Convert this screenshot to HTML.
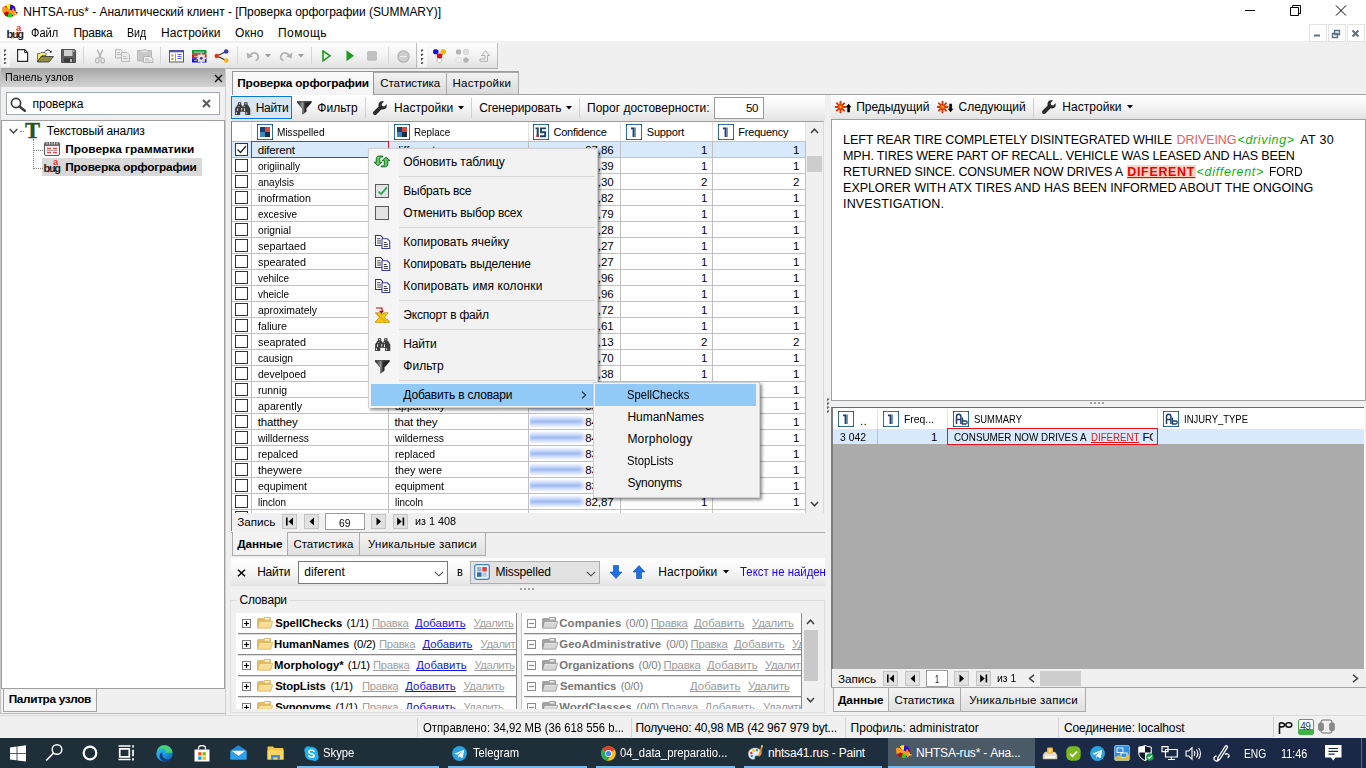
<!DOCTYPE html><html><head><meta charset="utf-8"><title>NHTSA-rus</title><style>
*{box-sizing:border-box;margin:0;padding:0}
html,body{width:1366px;height:768px;overflow:hidden;background:#f0f0f0}
body{font-family:"Liberation Sans",sans-serif;font-size:12px;color:#000;position:relative}
.a{position:absolute}
.t{position:absolute;white-space:nowrap;line-height:1}
u{text-decoration:underline}
.t{text-decoration-skip-ink:none}
</style></head><body>
<div class="a" style="left:0px;top:0px;width:1366px;height:41px;background:#fff"></div>
<div class="t" style="left:23.3px;top:6.2px;font-size:12px;letter-spacing:-0.041px;">NHTSA-rus* - Аналитический клиент - [Проверка орфографии (SUMMARY)]</div>
<svg class="a" style="left:1240px;top:0px;" width="110" height="22" viewBox="0 0 110 22"><path d="M5 10.5h10M50.5 7.5h8v8h-8zM52.5 7.5v-2h8v8h-2M96 5.5l10 10M106 5.5l-10 10" fill="none" stroke="#000" stroke-width="1"/></svg>
<div class="t" style="left:30.8px;top:26.7px;font-size:12px;letter-spacing:0.000px;transform:scaleX(0.9220);transform-origin:0 0;">Файл</div>
<div class="t" style="left:73.5px;top:26.7px;font-size:12px;letter-spacing:-0.256px;">Правка</div>
<div class="t" style="left:127.3px;top:26.7px;font-size:12px;letter-spacing:0.000px;transform:scaleX(0.8844);transform-origin:0 0;">Вид</div>
<div class="t" style="left:161.0px;top:26.7px;font-size:12px;letter-spacing:0.073px;">Настройки</div>
<div class="t" style="left:235.0px;top:26.7px;font-size:12px;letter-spacing:0.154px;">Окно</div>
<div class="t" style="left:278.0px;top:26.7px;font-size:12px;letter-spacing:0.442px;">Помощь</div>
<div class="a" style="left:1309px;top:24px;width:18px;height:18px;border:1px solid #e3e3e3;background:#fff"></div>
<div class="a" style="left:1328px;top:24px;width:18px;height:18px;border:1px solid #e3e3e3;background:#fff"></div>
<div class="a" style="left:1347px;top:24px;width:18px;height:18px;border:1px solid #e3e3e3;background:#fff"></div>
<svg class="a" style="left:1309px;top:24px;" width="56" height="18" viewBox="0 0 56 18"><path d="M5 11.5h6" stroke="#5f6f86" stroke-width="2"/><path d="M25.5 6.5h5v4h-5zM23.5 9.5h5v4h-5z" fill="#fff" stroke="#5f6f86" stroke-width="1.4"/><path d="M43.5 6.5l6 6M49.5 6.5l-6 6" stroke="#5f6f86" stroke-width="2"/></svg>
<div class="a" style="left:0px;top:43px;width:417px;height:25px;background:linear-gradient(#fdfdfd,#f3f3f3 50%,#e2e2e2);border-right:1px solid #bdbdbd"></div>
<div class="a" style="left:417px;top:43px;width:81px;height:25px;background:linear-gradient(#fdfdfd,#f3f3f3 50%,#e2e2e2);border-right:1px solid #bdbdbd"></div>
<div class="a" style="left:0px;top:87px;width:226px;height:627px;background:#f0f0f0"></div>
<div class="a" style="left:1px;top:68px;width:224px;height:19px;background:linear-gradient(#a6a6a6,#d4d4d4)"></div>
<div class="t" style="left:4.7px;top:72.0px;font-size:11.5px;letter-spacing:0.000px;transform:scaleX(0.9376);transform-origin:0 0;">Панель узлов</div>
<svg class="a" style="left:214px;top:74px;" width="9" height="9" viewBox="0 0 9 9"><path d="M1 1l7 7M8 1l-7 7" stroke="#000" stroke-width="1.3" fill="none"/></svg>
<div class="a" style="left:6px;top:92px;width:214px;height:23px;background:#fff;border:1px solid #a2a7ae"></div>
<svg class="a" style="left:10px;top:96.5px;" width="17" height="15" viewBox="0 0 17 15"><circle cx="6" cy="6" r="4.600" fill="none" stroke="#3a3a3a" stroke-width="1.700"/><path d="M9.500 9.500l5.300 4.300" stroke="#3a3a3a" stroke-width="2.400" stroke-linecap="round"/></svg>
<div class="t" style="left:32.5px;top:97.8px;font-size:12px;letter-spacing:-0.103px;">проверка</div>
<svg class="a" style="left:202px;top:99px;" width="9" height="9" viewBox="0 0 9 9"><path d="M1 1l7 7M8 1l-7 7" stroke="#5a5a5a" stroke-width="2" fill="none"/></svg>
<div class="a" style="left:1px;top:120px;width:224px;height:569px;background:#fff;border:1px solid #9f9f9f"></div>
<svg class="a" style="left:9px;top:128px;" width="9" height="7" viewBox="0 0 9 7"><path d="M0.7 1l3.8 4 3.8-4" stroke="#404040" stroke-width="1.4" fill="none"/></svg>
<div class="t" style="left:25px;top:119.5px;font-family:'Liberation Serif',serif;font-weight:bold;font-size:22.5px;color:#26551f;-webkit-text-stroke:0.4px #26551f">T</div>
<div class="t" style="left:46.7px;top:124.7px;font-size:12px;letter-spacing:-0.186px;">Текстовый анализ</div>
<div class="t" style="left:65.3px;top:143.8px;font-size:11.8px;letter-spacing:0.034px;font-weight:bold;">Проверка грамматики</div>
<div class="a" style="left:42px;top:158px;width:160px;height:18px;background:#d9d9d9"></div>
<div class="t" style="left:65.3px;top:161.5px;font-size:11.8px;letter-spacing:-0.180px;font-weight:bold;">Проверка орфографии</div>
<div class="a" style="left:20px;top:131px;width:4px;height:1px;border-top:1px dotted #808080"></div>
<div class="a" style="left:33px;top:139px;width:1px;height:30px;border-left:1px dotted #808080"></div>
<div class="a" style="left:33px;top:150px;width:10px;height:1px;border-top:1px dotted #808080"></div>
<div class="a" style="left:33px;top:168px;width:10px;height:1px;border-top:1px dotted #808080"></div>
<div class="a" style="left:3px;top:689px;width:94px;height:23px;background:#f5f5f5;border:1px solid #a4a4a4;border-top:none"></div>
<div class="t" style="left:8.7px;top:693.8px;font-size:11.8px;letter-spacing:-0.326px;font-weight:bold;">Палитра узлов</div>
<div class="a" style="left:0px;top:713px;width:226px;height:1px;background:#bcbcbc"></div>
<div class="a" style="left:0px;top:68px;width:1px;height:646px;background:#c6c6c6"></div>
<div class="a" style="left:225px;top:68px;width:1px;height:647px;background:#cfcfcf"></div>
<div class="a" style="left:374px;top:94px;width:992px;height:1px;background:#a3a3a3"></div>
<div class="a" style="left:374px;top:72px;width:73px;height:22px;background:linear-gradient(#f2f2f2,#dadada);border:1px solid #a9a9a9;border-left:none;border-bottom:none"></div>
<div class="a" style="left:447px;top:72px;width:72px;height:22px;background:linear-gradient(#f2f2f2,#dadada);border:1px solid #a9a9a9;border-left:none;border-bottom:none"></div>
<div class="a" style="left:374px;top:71px;width:145px;height:1px;background:#9c9c9c"></div>
<div class="a" style="left:226px;top:68px;width:272px;height:1px;background:#adadad"></div>
<div class="a" style="left:232px;top:71px;width:142px;height:24px;background:linear-gradient(#fafafa,#f4f4f4);border:1px solid #959595;border-bottom:none"></div>
<div class="t" style="left:237.3px;top:77.5px;font-size:11.8px;letter-spacing:-0.165px;font-weight:bold;">Проверка орфографии</div>
<div class="t" style="left:380.2px;top:77.8px;font-size:11.5px;letter-spacing:-0.040px;">Статистика</div>
<div class="t" style="left:452.5px;top:77.8px;font-size:11.5px;letter-spacing:0.268px;">Настройки</div>
<div class="a" style="left:231px;top:95px;width:594px;height:26px;background:linear-gradient(#ffffff,#f6f6f6 45%,#e3e3e3)"></div>
<div class="a" style="left:231px;top:96px;width:61px;height:23px;background:#d8e6f3;border:1px solid #0a78d6"></div>
<div class="t" style="left:255.7px;top:102.1px;font-size:12px;letter-spacing:-0.289px;">Найти</div>
<div class="t" style="left:317.3px;top:102.1px;font-size:12px;letter-spacing:0.014px;">Фильтр</div>
<div class="a" style="left:365px;top:98px;width:1px;height:20px;background:#d0d0d0"></div>
<div class="t" style="left:394.0px;top:102.1px;font-size:12px;letter-spacing:0.051px;">Настройки</div>
<svg class="a" style="left:458px;top:106px;" width="6" height="4" viewBox="0 0 6 4"><path d="M0 0h6l-3 3.5z" fill="#000"/></svg>
<div class="a" style="left:471px;top:98px;width:1px;height:20px;background:#d0d0d0"></div>
<div class="t" style="left:479.2px;top:102.1px;font-size:12px;letter-spacing:-0.137px;">Сгенерировать</div>
<svg class="a" style="left:566px;top:106px;" width="6" height="4" viewBox="0 0 6 4"><path d="M0 0h6l-3 3.5z" fill="#000"/></svg>
<div class="a" style="left:579px;top:98px;width:1px;height:20px;background:#d0d0d0"></div>
<div class="t" style="left:587.0px;top:102.1px;font-size:12px;letter-spacing:0.005px;">Порог достоверности:</div>
<div class="a" style="left:714px;top:97px;width:50px;height:22px;background:#fff;border:1px solid #9a9a9a"></div>
<div class="t" style="right:608.0px;top:103.3px;font-size:11.5px;letter-spacing:-0.4px;">50</div>
<div class="a" style="left:231px;top:121px;width:593px;height:410px;background:#fff;border:1px solid #9e9e9e;border-left-color:#7e7e7e;border-bottom:none;border-right:1px solid #dadada"></div>
<div class="a" style="left:251px;top:122px;width:1px;height:20px;background:#e2e2e2"></div>
<div class="a" style="left:388px;top:122px;width:1px;height:20px;background:#e2e2e2"></div>
<div class="a" style="left:528px;top:122px;width:1px;height:20px;background:#e2e2e2"></div>
<div class="a" style="left:620px;top:122px;width:1px;height:20px;background:#e2e2e2"></div>
<div class="a" style="left:712px;top:122px;width:1px;height:20px;background:#e2e2e2"></div>
<div class="a" style="left:805px;top:122px;width:1px;height:20px;background:#e2e2e2"></div>
<svg class="a" style="left:257px;top:124px;" width="16" height="16" viewBox="0 0 16 16"><rect x="0.5" y="0.5" width="15" height="15" fill="#fff" stroke="#2f6f9f"/><rect x="3" y="3" width="5" height="5" fill="#1d3f6a"/><rect x="8" y="3" width="5" height="5" fill="#e0443c"/><rect x="3" y="8" width="5" height="5" fill="#3f86c0"/><rect x="8" y="8" width="5" height="5" fill="#1b2f45"/><path d="M0 2V0h2M14 0h2v2M16 14v2h-2M2 16H0v-2" stroke="#1d3f6a" fill="none"/></svg>
<div class="t" style="left:277.2px;top:127.1px;font-size:11px;letter-spacing:0.000px;transform:scaleX(0.9140);transform-origin:0 0;">Misspelled</div>
<svg class="a" style="left:394px;top:124px;" width="16" height="16" viewBox="0 0 16 16"><rect x="0.5" y="0.5" width="15" height="15" fill="#fff" stroke="#2f6f9f"/><rect x="3" y="3" width="5" height="5" fill="#1d3f6a"/><rect x="8" y="3" width="5" height="5" fill="#e0443c"/><rect x="3" y="8" width="5" height="5" fill="#3f86c0"/><rect x="8" y="8" width="5" height="5" fill="#1b2f45"/><path d="M0 2V0h2M14 0h2v2M16 14v2h-2M2 16H0v-2" stroke="#1d3f6a" fill="none"/></svg>
<div class="t" style="left:413.8px;top:127.1px;font-size:11px;letter-spacing:0.000px;transform:scaleX(0.8969);transform-origin:0 0;">Replace</div>
<svg class="a" style="left:533px;top:124px;" width="16" height="16" viewBox="0 0 16 16"><rect x="0.5" y="0.5" width="15" height="15" fill="#fff" stroke="#2f6f9f"/><path d="M0 2V0h2M14 0h2v2M16 14v2h-2M2 16H0v-2" stroke="#1d3f6a" fill="none"/><path d="M2.500 3.500h3.200v9.500H3.700V5H2.500z" fill="#1d3f6a"/><path d="M13 4.400H8v3.800h4.200v4H7" fill="none" stroke="#1d3f6a" stroke-width="1.900"/><rect x="3.400" y="11" width="2.600" height="2" fill="#d22"/></svg>
<div class="t" style="left:553.5px;top:127.1px;font-size:11px;letter-spacing:-0.265px;">Confidence</div>
<svg class="a" style="left:626px;top:124px;" width="16" height="16" viewBox="0 0 16 16"><rect x="0.5" y="0.5" width="15" height="15" fill="#fff" stroke="#2f6f9f"/><path d="M0 2V0h2M14 0h2v2M16 14v2h-2M2 16H0v-2" stroke="#1d3f6a" fill="none"/><path d="M5 3.500h3.600v9.500H6.600V5.200H5z" fill="#1d3f6a"/><path d="M8.600 3.500h1.200v9.500h-1.200z" fill="#4f80ac"/></svg>
<div class="t" style="left:646.7px;top:127.1px;font-size:11px;letter-spacing:-0.147px;">Support</div>
<svg class="a" style="left:718px;top:124px;" width="16" height="16" viewBox="0 0 16 16"><rect x="0.5" y="0.5" width="15" height="15" fill="#fff" stroke="#2f6f9f"/><path d="M0 2V0h2M14 0h2v2M16 14v2h-2M2 16H0v-2" stroke="#1d3f6a" fill="none"/><path d="M5 3.500h3.600v9.500H6.600V5.200H5z" fill="#1d3f6a"/><path d="M8.600 3.500h1.200v9.500h-1.200z" fill="#4f80ac"/></svg>
<div class="t" style="left:738.3px;top:127.1px;font-size:11px;letter-spacing:-0.219px;">Frequency</div>
<div class="a" style="left:232px;top:141px;width:574px;height:372px;overflow:hidden">
<div class="a" style="left:0;top:0px;width:574px;height:16px;background:#d7e9fb;border-top:1px solid #c0c0c0"></div>
<div class="a" style="left:3px;top:2px;width:13px;height:13px;background:#fff;border:1px solid #333"></div>
<svg class="a" style="left:3px;top:2px" width="13" height="13"><path d="M2.5 6.5l3 3 5.5-6.5" fill="none" stroke="#222" stroke-width="1.2"/></svg>
<div class="t" style="left:25.7px;top:3.6px;font-size:11.5px;letter-spacing:-0.170px">diferent</div>
<div class="t" style="left:162.5px;top:3.6px;font-size:11.5px;letter-spacing:-0.038px">different</div>
<div class="t" style="right:192.5px;top:3.6px;font-size:11.5px;letter-spacing:-0.1px">97,86</div>
<div class="t" style="right:98.5px;top:3.6px;font-size:11.5px">1</div>
<div class="t" style="right:6.5px;top:3.6px;font-size:11.5px">1</div>
<div class="a" style="left:0;top:16px;width:574px;height:16px;background:#fff;border-top:1px solid #c0c0c0"></div>
<div class="a" style="left:3px;top:18px;width:13px;height:13px;background:#fff;border:1px solid #333"></div>
<div class="t" style="left:25.7px;top:19.6px;font-size:11.5px;transform:scaleX(0.8761);transform-origin:0 0">origiinally</div>
<div class="t" style="left:162.5px;top:19.6px;font-size:11.5px;transform:scaleX(0.8814);transform-origin:0 0">originally</div>
<div class="a" style="left:297px;top:18px;width:67px;height:13px;background:linear-gradient(#fff,#9fbbf6 50%,#fff);-webkit-mask-image:linear-gradient(90deg,transparent,#000 2px,#000 calc(100% - 8px),transparent)"></div>
<div class="t" style="right:192.5px;top:19.6px;font-size:11.5px;letter-spacing:-0.1px">96,39</div>
<div class="t" style="right:98.5px;top:19.6px;font-size:11.5px">1</div>
<div class="t" style="right:6.5px;top:19.6px;font-size:11.5px">1</div>
<div class="a" style="left:0;top:32px;width:574px;height:16px;background:#fff;border-top:1px solid #c0c0c0"></div>
<div class="a" style="left:3px;top:34px;width:13px;height:13px;background:#fff;border:1px solid #333"></div>
<div class="t" style="left:25.7px;top:35.6px;font-size:11.5px;transform:scaleX(0.8665);transform-origin:0 0">anaylsis</div>
<div class="t" style="left:162.5px;top:35.6px;font-size:11.5px;transform:scaleX(0.8665);transform-origin:0 0">analysis</div>
<div class="a" style="left:297px;top:34px;width:66px;height:13px;background:linear-gradient(#fff,#9fbbf6 50%,#fff);-webkit-mask-image:linear-gradient(90deg,transparent,#000 2px,#000 calc(100% - 8px),transparent)"></div>
<div class="t" style="right:192.5px;top:35.6px;font-size:11.5px;letter-spacing:-0.1px">95,30</div>
<div class="t" style="right:98.5px;top:35.6px;font-size:11.5px">2</div>
<div class="t" style="right:6.5px;top:35.6px;font-size:11.5px">2</div>
<div class="a" style="left:0;top:48px;width:574px;height:16px;background:#fff;border-top:1px solid #c0c0c0"></div>
<div class="a" style="left:3px;top:50px;width:13px;height:13px;background:#fff;border:1px solid #333"></div>
<div class="t" style="left:25.7px;top:51.6px;font-size:11.5px;transform:scaleX(0.9316);transform-origin:0 0">inofrmation</div>
<div class="t" style="left:162.5px;top:51.6px;font-size:11.5px;transform:scaleX(0.9316);transform-origin:0 0">information</div>
<div class="a" style="left:297px;top:50px;width:65px;height:13px;background:linear-gradient(#fff,#9fbbf6 50%,#fff);-webkit-mask-image:linear-gradient(90deg,transparent,#000 2px,#000 calc(100% - 8px),transparent)"></div>
<div class="t" style="right:192.5px;top:51.6px;font-size:11.5px;letter-spacing:-0.1px">93,82</div>
<div class="t" style="right:98.5px;top:51.6px;font-size:11.5px">1</div>
<div class="t" style="right:6.5px;top:51.6px;font-size:11.5px">1</div>
<div class="a" style="left:0;top:64px;width:574px;height:16px;background:#fff;border-top:1px solid #c0c0c0"></div>
<div class="a" style="left:3px;top:66px;width:13px;height:13px;background:#fff;border:1px solid #333"></div>
<div class="t" style="left:25.7px;top:67.6px;font-size:11.5px;transform:scaleX(0.8716);transform-origin:0 0">excesive</div>
<div class="t" style="left:162.5px;top:67.6px;font-size:11.5px;transform:scaleX(0.8714);transform-origin:0 0">excessive</div>
<div class="a" style="left:297px;top:66px;width:64px;height:13px;background:linear-gradient(#fff,#9fbbf6 50%,#fff);-webkit-mask-image:linear-gradient(90deg,transparent,#000 2px,#000 calc(100% - 8px),transparent)"></div>
<div class="t" style="right:192.5px;top:67.6px;font-size:11.5px;letter-spacing:-0.1px">92,79</div>
<div class="t" style="right:98.5px;top:67.6px;font-size:11.5px">1</div>
<div class="t" style="right:6.5px;top:67.6px;font-size:11.5px">1</div>
<div class="a" style="left:0;top:80px;width:574px;height:16px;background:#fff;border-top:1px solid #c0c0c0"></div>
<div class="a" style="left:3px;top:82px;width:13px;height:13px;background:#fff;border:1px solid #333"></div>
<div class="t" style="left:25.7px;top:83.6px;font-size:11.5px;transform:scaleX(0.8900);transform-origin:0 0">orignial</div>
<div class="t" style="left:162.5px;top:83.6px;font-size:11.5px;transform:scaleX(0.8900);transform-origin:0 0">original</div>
<div class="a" style="left:297px;top:82px;width:64px;height:13px;background:linear-gradient(#fff,#9fbbf6 50%,#fff);-webkit-mask-image:linear-gradient(90deg,transparent,#000 2px,#000 calc(100% - 8px),transparent)"></div>
<div class="t" style="right:192.5px;top:83.6px;font-size:11.5px;letter-spacing:-0.1px">92,28</div>
<div class="t" style="right:98.5px;top:83.6px;font-size:11.5px">1</div>
<div class="t" style="right:6.5px;top:83.6px;font-size:11.5px">1</div>
<div class="a" style="left:0;top:96px;width:574px;height:16px;background:#fff;border-top:1px solid #c0c0c0"></div>
<div class="a" style="left:3px;top:98px;width:13px;height:13px;background:#fff;border:1px solid #333"></div>
<div class="t" style="left:25.7px;top:99.6px;font-size:11.5px;transform:scaleX(0.9384);transform-origin:0 0">separtaed</div>
<div class="t" style="left:162.5px;top:99.6px;font-size:11.5px;transform:scaleX(0.9384);transform-origin:0 0">separated</div>
<div class="a" style="left:297px;top:98px;width:63px;height:13px;background:linear-gradient(#fff,#9fbbf6 50%,#fff);-webkit-mask-image:linear-gradient(90deg,transparent,#000 2px,#000 calc(100% - 8px),transparent)"></div>
<div class="t" style="right:192.5px;top:99.6px;font-size:11.5px;letter-spacing:-0.1px">91,27</div>
<div class="t" style="right:98.5px;top:99.6px;font-size:11.5px">1</div>
<div class="t" style="right:6.5px;top:99.6px;font-size:11.5px">1</div>
<div class="a" style="left:0;top:112px;width:574px;height:16px;background:#fff;border-top:1px solid #c0c0c0"></div>
<div class="a" style="left:3px;top:114px;width:13px;height:13px;background:#fff;border:1px solid #333"></div>
<div class="t" style="left:25.7px;top:115.6px;font-size:11.5px;transform:scaleX(0.9384);transform-origin:0 0">spearated</div>
<div class="t" style="left:162.5px;top:115.6px;font-size:11.5px;transform:scaleX(0.9384);transform-origin:0 0">separated</div>
<div class="a" style="left:297px;top:114px;width:63px;height:13px;background:linear-gradient(#fff,#9fbbf6 50%,#fff);-webkit-mask-image:linear-gradient(90deg,transparent,#000 2px,#000 calc(100% - 8px),transparent)"></div>
<div class="t" style="right:192.5px;top:115.6px;font-size:11.5px;letter-spacing:-0.1px">91,27</div>
<div class="t" style="right:98.5px;top:115.6px;font-size:11.5px">1</div>
<div class="t" style="right:6.5px;top:115.6px;font-size:11.5px">1</div>
<div class="a" style="left:0;top:128px;width:574px;height:16px;background:#fff;border-top:1px solid #c0c0c0"></div>
<div class="a" style="left:3px;top:130px;width:13px;height:13px;background:#fff;border:1px solid #333"></div>
<div class="t" style="left:25.7px;top:131.6px;font-size:11.5px;transform:scaleX(0.8660);transform-origin:0 0">vehilce</div>
<div class="t" style="left:162.5px;top:131.6px;font-size:11.5px;transform:scaleX(0.8660);transform-origin:0 0">vehicle</div>
<div class="a" style="left:297px;top:130px;width:62px;height:13px;background:linear-gradient(#fff,#9fbbf6 50%,#fff);-webkit-mask-image:linear-gradient(90deg,transparent,#000 2px,#000 calc(100% - 8px),transparent)"></div>
<div class="t" style="right:192.5px;top:131.6px;font-size:11.5px;letter-spacing:-0.1px">89,96</div>
<div class="t" style="right:98.5px;top:131.6px;font-size:11.5px">1</div>
<div class="t" style="right:6.5px;top:131.6px;font-size:11.5px">1</div>
<div class="a" style="left:0;top:144px;width:574px;height:16px;background:#fff;border-top:1px solid #c0c0c0"></div>
<div class="a" style="left:3px;top:146px;width:13px;height:13px;background:#fff;border:1px solid #333"></div>
<div class="t" style="left:25.7px;top:147.6px;font-size:11.5px;transform:scaleX(0.8660);transform-origin:0 0">vheicle</div>
<div class="t" style="left:162.5px;top:147.6px;font-size:11.5px;transform:scaleX(0.8660);transform-origin:0 0">vehicle</div>
<div class="a" style="left:297px;top:146px;width:62px;height:13px;background:linear-gradient(#fff,#9fbbf6 50%,#fff);-webkit-mask-image:linear-gradient(90deg,transparent,#000 2px,#000 calc(100% - 8px),transparent)"></div>
<div class="t" style="right:192.5px;top:147.6px;font-size:11.5px;letter-spacing:-0.1px">89,96</div>
<div class="t" style="right:98.5px;top:147.6px;font-size:11.5px">1</div>
<div class="t" style="right:6.5px;top:147.6px;font-size:11.5px">1</div>
<div class="a" style="left:0;top:160px;width:574px;height:16px;background:#fff;border-top:1px solid #c0c0c0"></div>
<div class="a" style="left:3px;top:162px;width:13px;height:13px;background:#fff;border:1px solid #333"></div>
<div class="t" style="left:25.7px;top:163.6px;font-size:11.5px;transform:scaleX(0.9050);transform-origin:0 0">aproximately</div>
<div class="t" style="left:162.5px;top:163.6px;font-size:11.5px;transform:scaleX(0.9079);transform-origin:0 0">approximately</div>
<div class="a" style="left:297px;top:162px;width:62px;height:13px;background:linear-gradient(#fff,#9fbbf6 50%,#fff);-webkit-mask-image:linear-gradient(90deg,transparent,#000 2px,#000 calc(100% - 8px),transparent)"></div>
<div class="t" style="right:192.5px;top:163.6px;font-size:11.5px;letter-spacing:-0.1px">88,72</div>
<div class="t" style="right:98.5px;top:163.6px;font-size:11.5px">1</div>
<div class="t" style="right:6.5px;top:163.6px;font-size:11.5px">1</div>
<div class="a" style="left:0;top:176px;width:574px;height:16px;background:#fff;border-top:1px solid #c0c0c0"></div>
<div class="a" style="left:3px;top:178px;width:13px;height:13px;background:#fff;border:1px solid #333"></div>
<div class="t" style="left:25.7px;top:179.6px;font-size:11.5px;transform:scaleX(0.9258);transform-origin:0 0">faliure</div>
<div class="t" style="left:162.5px;top:179.6px;font-size:11.5px;transform:scaleX(0.9258);transform-origin:0 0">failure</div>
<div class="a" style="left:297px;top:178px;width:62px;height:13px;background:linear-gradient(#fff,#9fbbf6 50%,#fff);-webkit-mask-image:linear-gradient(90deg,transparent,#000 2px,#000 calc(100% - 8px),transparent)"></div>
<div class="t" style="right:192.5px;top:179.6px;font-size:11.5px;letter-spacing:-0.1px">88,61</div>
<div class="t" style="right:98.5px;top:179.6px;font-size:11.5px">1</div>
<div class="t" style="right:6.5px;top:179.6px;font-size:11.5px">1</div>
<div class="a" style="left:0;top:192px;width:574px;height:16px;background:#fff;border-top:1px solid #c0c0c0"></div>
<div class="a" style="left:3px;top:194px;width:13px;height:13px;background:#fff;border:1px solid #333"></div>
<div class="t" style="left:25.7px;top:195.6px;font-size:11.5px;transform:scaleX(0.9384);transform-origin:0 0">seaprated</div>
<div class="t" style="left:162.5px;top:195.6px;font-size:11.5px;transform:scaleX(0.9384);transform-origin:0 0">separated</div>
<div class="a" style="left:297px;top:194px;width:61px;height:13px;background:linear-gradient(#fff,#9fbbf6 50%,#fff);-webkit-mask-image:linear-gradient(90deg,transparent,#000 2px,#000 calc(100% - 8px),transparent)"></div>
<div class="t" style="right:192.5px;top:195.6px;font-size:11.5px;letter-spacing:-0.1px">88,13</div>
<div class="t" style="right:98.5px;top:195.6px;font-size:11.5px">2</div>
<div class="t" style="right:6.5px;top:195.6px;font-size:11.5px">2</div>
<div class="a" style="left:0;top:208px;width:574px;height:16px;background:#fff;border-top:1px solid #c0c0c0"></div>
<div class="a" style="left:3px;top:210px;width:13px;height:13px;background:#fff;border:1px solid #333"></div>
<div class="t" style="left:25.7px;top:211.6px;font-size:11.5px;transform:scaleX(0.8830);transform-origin:0 0">causign</div>
<div class="t" style="left:162.5px;top:211.6px;font-size:11.5px;transform:scaleX(0.8830);transform-origin:0 0">causing</div>
<div class="a" style="left:297px;top:210px;width:60px;height:13px;background:linear-gradient(#fff,#9fbbf6 50%,#fff);-webkit-mask-image:linear-gradient(90deg,transparent,#000 2px,#000 calc(100% - 8px),transparent)"></div>
<div class="t" style="right:192.5px;top:211.6px;font-size:11.5px;letter-spacing:-0.1px">86,70</div>
<div class="t" style="right:98.5px;top:211.6px;font-size:11.5px">1</div>
<div class="t" style="right:6.5px;top:211.6px;font-size:11.5px">1</div>
<div class="a" style="left:0;top:224px;width:574px;height:16px;background:#fff;border-top:1px solid #c0c0c0"></div>
<div class="a" style="left:3px;top:226px;width:13px;height:13px;background:#fff;border:1px solid #333"></div>
<div class="t" style="left:25.7px;top:227.6px;font-size:11.5px;transform:scaleX(0.9043);transform-origin:0 0">develpoed</div>
<div class="t" style="left:162.5px;top:227.6px;font-size:11.5px;transform:scaleX(0.9043);transform-origin:0 0">developed</div>
<div class="a" style="left:297px;top:226px;width:60px;height:13px;background:linear-gradient(#fff,#9fbbf6 50%,#fff);-webkit-mask-image:linear-gradient(90deg,transparent,#000 2px,#000 calc(100% - 8px),transparent)"></div>
<div class="t" style="right:192.5px;top:227.6px;font-size:11.5px;letter-spacing:-0.1px">86,38</div>
<div class="t" style="right:98.5px;top:227.6px;font-size:11.5px">1</div>
<div class="t" style="right:6.5px;top:227.6px;font-size:11.5px">1</div>
<div class="a" style="left:0;top:240px;width:574px;height:16px;background:#fff;border-top:1px solid #c0c0c0"></div>
<div class="a" style="left:3px;top:242px;width:13px;height:13px;background:#fff;border:1px solid #333"></div>
<div class="t" style="left:25.7px;top:243.6px;font-size:11.5px;transform:scaleX(0.9071);transform-origin:0 0">runnig</div>
<div class="t" style="left:162.5px;top:243.6px;font-size:11.5px;transform:scaleX(0.9123);transform-origin:0 0">running</div>
<div class="a" style="left:297px;top:242px;width:59px;height:13px;background:linear-gradient(#fff,#9fbbf6 50%,#fff);-webkit-mask-image:linear-gradient(90deg,transparent,#000 2px,#000 calc(100% - 8px),transparent)"></div>
<div class="t" style="right:192.5px;top:243.6px;font-size:11.5px;letter-spacing:-0.1px">85,71</div>
<div class="t" style="right:98.5px;top:243.6px;font-size:11.5px">1</div>
<div class="t" style="right:6.5px;top:243.6px;font-size:11.5px">1</div>
<div class="a" style="left:0;top:256px;width:574px;height:16px;background:#fff;border-top:1px solid #c0c0c0"></div>
<div class="a" style="left:3px;top:258px;width:13px;height:13px;background:#fff;border:1px solid #333"></div>
<div class="t" style="left:25.7px;top:259.6px;font-size:11.5px;transform:scaleX(0.9300);transform-origin:0 0">aparently</div>
<div class="t" style="left:162.5px;top:259.6px;font-size:11.5px;transform:scaleX(0.9310);transform-origin:0 0">apparently</div>
<div class="a" style="left:297px;top:258px;width:59px;height:13px;background:linear-gradient(#fff,#9fbbf6 50%,#fff);-webkit-mask-image:linear-gradient(90deg,transparent,#000 2px,#000 calc(100% - 8px),transparent)"></div>
<div class="t" style="right:192.5px;top:259.6px;font-size:11.5px;letter-spacing:-0.1px">85,52</div>
<div class="t" style="right:98.5px;top:259.6px;font-size:11.5px">1</div>
<div class="t" style="right:6.5px;top:259.6px;font-size:11.5px">1</div>
<div class="a" style="left:0;top:272px;width:574px;height:16px;background:#fff;border-top:1px solid #c0c0c0"></div>
<div class="a" style="left:3px;top:274px;width:13px;height:13px;background:#fff;border:1px solid #333"></div>
<div class="t" style="left:25.7px;top:275.6px;font-size:11.5px;letter-spacing:-0.115px">thatthey</div>
<div class="t" style="left:162.5px;top:275.6px;font-size:11.5px;letter-spacing:-0.124px">that they</div>
<div class="a" style="left:297px;top:274px;width:59px;height:13px;background:linear-gradient(#fff,#9fbbf6 50%,#fff);-webkit-mask-image:linear-gradient(90deg,transparent,#000 2px,#000 calc(100% - 8px),transparent)"></div>
<div class="t" style="right:192.5px;top:275.6px;font-size:11.5px;letter-spacing:-0.1px">84,91</div>
<div class="t" style="right:98.5px;top:275.6px;font-size:11.5px">1</div>
<div class="t" style="right:6.5px;top:275.6px;font-size:11.5px">1</div>
<div class="a" style="left:0;top:288px;width:574px;height:16px;background:#fff;border-top:1px solid #c0c0c0"></div>
<div class="a" style="left:3px;top:290px;width:13px;height:13px;background:#fff;border:1px solid #333"></div>
<div class="t" style="left:25.7px;top:291.6px;font-size:11.5px;transform:scaleX(0.8966);transform-origin:0 0">willderness</div>
<div class="t" style="left:162.5px;top:291.6px;font-size:11.5px;transform:scaleX(0.9019);transform-origin:0 0">wilderness</div>
<div class="a" style="left:297px;top:290px;width:59px;height:13px;background:linear-gradient(#fff,#9fbbf6 50%,#fff);-webkit-mask-image:linear-gradient(90deg,transparent,#000 2px,#000 calc(100% - 8px),transparent)"></div>
<div class="t" style="right:192.5px;top:291.6px;font-size:11.5px;letter-spacing:-0.1px">84,37</div>
<div class="t" style="right:98.5px;top:291.6px;font-size:11.5px">1</div>
<div class="t" style="right:6.5px;top:291.6px;font-size:11.5px">1</div>
<div class="a" style="left:0;top:304px;width:574px;height:16px;background:#fff;border-top:1px solid #c0c0c0"></div>
<div class="a" style="left:3px;top:306px;width:13px;height:13px;background:#fff;border:1px solid #333"></div>
<div class="t" style="left:25.7px;top:307.6px;font-size:11.5px;transform:scaleX(0.9067);transform-origin:0 0">repalced</div>
<div class="t" style="left:162.5px;top:307.6px;font-size:11.5px;transform:scaleX(0.9067);transform-origin:0 0">replaced</div>
<div class="a" style="left:297px;top:306px;width:58px;height:13px;background:linear-gradient(#fff,#9fbbf6 50%,#fff);-webkit-mask-image:linear-gradient(90deg,transparent,#000 2px,#000 calc(100% - 8px),transparent)"></div>
<div class="t" style="right:192.5px;top:307.6px;font-size:11.5px;letter-spacing:-0.1px">83,95</div>
<div class="t" style="right:98.5px;top:307.6px;font-size:11.5px">1</div>
<div class="t" style="right:6.5px;top:307.6px;font-size:11.5px">1</div>
<div class="a" style="left:0;top:320px;width:574px;height:16px;background:#fff;border-top:1px solid #c0c0c0"></div>
<div class="a" style="left:3px;top:322px;width:13px;height:13px;background:#fff;border:1px solid #333"></div>
<div class="t" style="left:25.7px;top:323.6px;font-size:11.5px;transform:scaleX(0.9429);transform-origin:0 0">theywere</div>
<div class="t" style="left:162.5px;top:323.6px;font-size:11.5px;transform:scaleX(0.9427);transform-origin:0 0">they were</div>
<div class="a" style="left:297px;top:322px;width:58px;height:13px;background:linear-gradient(#fff,#9fbbf6 50%,#fff);-webkit-mask-image:linear-gradient(90deg,transparent,#000 2px,#000 calc(100% - 8px),transparent)"></div>
<div class="t" style="right:192.5px;top:323.6px;font-size:11.5px;letter-spacing:-0.1px">83,64</div>
<div class="t" style="right:98.5px;top:323.6px;font-size:11.5px">1</div>
<div class="t" style="right:6.5px;top:323.6px;font-size:11.5px">1</div>
<div class="a" style="left:0;top:336px;width:574px;height:16px;background:#fff;border-top:1px solid #c0c0c0"></div>
<div class="a" style="left:3px;top:338px;width:13px;height:13px;background:#fff;border:1px solid #333"></div>
<div class="t" style="left:25.7px;top:339.6px;font-size:11.5px;transform:scaleX(0.9124);transform-origin:0 0">equpiment</div>
<div class="t" style="left:162.5px;top:339.6px;font-size:11.5px;transform:scaleX(0.9124);transform-origin:0 0">equipment</div>
<div class="a" style="left:297px;top:338px;width:58px;height:13px;background:linear-gradient(#fff,#9fbbf6 50%,#fff);-webkit-mask-image:linear-gradient(90deg,transparent,#000 2px,#000 calc(100% - 8px),transparent)"></div>
<div class="t" style="right:192.5px;top:339.6px;font-size:11.5px;letter-spacing:-0.1px">83,21</div>
<div class="t" style="right:98.5px;top:339.6px;font-size:11.5px">1</div>
<div class="t" style="right:6.5px;top:339.6px;font-size:11.5px">1</div>
<div class="a" style="left:0;top:352px;width:574px;height:16px;background:#fff;border-top:1px solid #c0c0c0"></div>
<div class="a" style="left:3px;top:354px;width:13px;height:13px;background:#fff;border:1px solid #333"></div>
<div class="t" style="left:25.7px;top:355.6px;font-size:11.5px;transform:scaleX(0.8588);transform-origin:0 0">linclon</div>
<div class="t" style="left:162.5px;top:355.6px;font-size:11.5px;transform:scaleX(0.8588);transform-origin:0 0">lincoln</div>
<div class="a" style="left:297px;top:354px;width:58px;height:13px;background:linear-gradient(#fff,#9fbbf6 50%,#fff);-webkit-mask-image:linear-gradient(90deg,transparent,#000 2px,#000 calc(100% - 8px),transparent)"></div>
<div class="t" style="right:192.5px;top:355.6px;font-size:11.5px;letter-spacing:-0.1px">82,87</div>
<div class="t" style="right:98.5px;top:355.6px;font-size:11.5px">1</div>
<div class="t" style="right:6.5px;top:355.6px;font-size:11.5px">1</div>
<div class="a" style="left:0;top:368px;width:574px;height:16px;background:#fff;border-top:1px solid #c0c0c0"></div>
<div class="a" style="left:3px;top:370px;width:13px;height:13px;background:#fff;border:1px solid #333"></div>
<div class="a" style="left:19px;top:0;width:1px;height:372px;background:#c0c0c0"></div>
<div class="a" style="left:156px;top:0;width:1px;height:372px;background:#c0c0c0"></div>
<div class="a" style="left:296px;top:0;width:1px;height:372px;background:#c0c0c0"></div>
<div class="a" style="left:388px;top:0;width:1px;height:372px;background:#c0c0c0"></div>
<div class="a" style="left:480px;top:0;width:1px;height:372px;background:#c0c0c0"></div>
<div class="a" style="left:573px;top:0;width:1px;height:372px;background:#c0c0c0"></div>
</div>
<div class="a" style="left:251px;top:141px;width:138px;height:17px;border:1px solid #e8141c"></div>
<div class="a" style="left:806px;top:122px;width:17px;height:391px;background:#f0f0f0"></div>
<div class="a" style="left:807px;top:156px;width:15px;height:16px;background:#cdcdcd"></div>
<svg class="a" style="left:810px;top:128px;" width="9" height="6" viewBox="0 0 9 6"><path d="M1 5l3.5-3.8L8 5" fill="none" stroke="#404040" stroke-width="1.5"/></svg>
<svg class="a" style="left:810px;top:501px;" width="9" height="6" viewBox="0 0 9 6"><path d="M1 1l3.5 3.8L8 1" fill="none" stroke="#404040" stroke-width="1.5"/></svg>
<div class="a" style="left:232px;top:513px;width:592px;height:18px;background:#f0f0f0"></div>
<div class="t" style="left:237.2px;top:515.6px;font-size:11.7px;letter-spacing:-0.015px;">Запись</div>
<div class="a" style="left:282px;top:514px;width:15px;height:15px;background:#e1e1e1;border:1px solid #c4c4c4"></div>
<svg class="a" style="left:282px;top:514px;" width="15" height="15" viewBox="0 0 15 15"><path d="M4 3.5h1.6v8H4zM11 3.5v8l-4.5-4z" fill="#000"/></svg>
<div class="a" style="left:304px;top:514px;width:15px;height:15px;background:#e1e1e1;border:1px solid #c4c4c4"></div>
<svg class="a" style="left:304px;top:514px;" width="15" height="15" viewBox="0 0 15 15"><path d="M10 3.5v8l-4.5-4z" fill="#000"/></svg>
<div class="a" style="left:325px;top:513px;width:40px;height:17px;background:#fff;border:1px solid #9d9d9d"></div>
<div class="t" style="left:339.2px;top:518.1px;font-size:11.5px;letter-spacing:0.000px;transform:scaleX(0.8912);transform-origin:0 0;">69</div>
<div class="a" style="left:371px;top:514px;width:15px;height:15px;background:#e1e1e1;border:1px solid #c4c4c4"></div>
<svg class="a" style="left:371px;top:514px;" width="15" height="15" viewBox="0 0 15 15"><path d="M5.5 3.5v8l4.5-4z" fill="#000"/></svg>
<div class="a" style="left:393px;top:514px;width:15px;height:15px;background:#e1e1e1;border:1px solid #c4c4c4"></div>
<svg class="a" style="left:393px;top:514px;" width="15" height="15" viewBox="0 0 15 15"><path d="M9.6 3.5h1.6v8H9.6zM4.2 3.5v8l4.5-4z" fill="#000"/></svg>
<div class="t" style="left:414.5px;top:515.7px;font-size:11.5px;letter-spacing:0.000px;transform:scaleX(0.9411);transform-origin:0 0;">из 1 408</div>
<div class="a" style="left:287px;top:532px;width:73px;height:24px;background:linear-gradient(#f4f4f4,#e0e0e0);border:1px solid #ababab;border-top:none;border-left:none"></div>
<div class="a" style="left:360px;top:532px;width:126px;height:24px;background:linear-gradient(#f4f4f4,#e0e0e0);border:1px solid #ababab;border-top:none;border-left:none"></div>
<div class="a" style="left:231px;top:532px;width:594px;height:1px;background:#ababab"></div>
<div class="a" style="left:232px;top:532px;width:56px;height:24px;background:#f3f3f3;border:1px solid #ababab;border-top:none"></div>
<div class="t" style="left:237.2px;top:538.8px;font-size:11.8px;letter-spacing:-0.077px;font-weight:bold;">Данные</div>
<div class="t" style="left:293.5px;top:538.8px;font-size:11.5px;letter-spacing:-0.050px;">Статистика</div>
<div class="t" style="left:368.0px;top:538.8px;font-size:11.5px;letter-spacing:0.256px;">Уникальные записи</div>
<div class="a" style="left:231px;top:558px;width:594px;height:28px;background:linear-gradient(#ffffff,#f7f7f7 45%,#e4e4e4)"></div>
<svg class="a" style="left:237px;top:569px;" width="9" height="8" viewBox="0 0 9 8"><path d="M1 0.8l7 6.4M8 0.8l-7 6.4" stroke="#000" stroke-width="1.5" fill="none"/></svg>
<div class="t" style="left:257.2px;top:565.9px;font-size:12px;letter-spacing:-0.229px;">Найти</div>
<div class="a" style="left:298px;top:561px;width:150px;height:23px;background:#fff;border:1px solid #7a7a7a"></div>
<div class="t" style="left:304.2px;top:565.9px;font-size:12px;letter-spacing:0.084px;">diferent</div>
<svg class="a" style="left:434px;top:571px;" width="10" height="6" viewBox="0 0 10 6"><path d="M0.8 0.8l4.2 4 4.2-4" fill="none" stroke="#444" stroke-width="1.1"/></svg>
<div class="t" style="left:456.5px;top:565.9px;font-size:12px;letter-spacing:0.000px;transform:scaleX(0.9412);transform-origin:0 0;">в</div>
<div class="a" style="left:470px;top:561px;width:130px;height:23px;background:#e2e2e2;border:1px solid #adadad"></div>
<svg class="a" style="left:474px;top:564px;" width="16" height="16" viewBox="0 0 16 16"><rect x="0.7" y="0.7" width="14.6" height="14.6" rx="2" fill="#eef4fb" stroke="#3f7fc0" stroke-width="1.2"/><rect x="3" y="3" width="4.5" height="4.5" fill="#9db3cc"/><rect x="8.3" y="3" width="4.5" height="4.5" fill="#e0443c"/><rect x="3" y="8.3" width="4.5" height="4.5" fill="#2f6fa8"/><rect x="8.3" y="8.3" width="4.5" height="4.5" fill="#b9c7d6"/></svg>
<div class="t" style="left:495.5px;top:566.0px;font-size:12px;letter-spacing:-0.149px;">Misspelled</div>
<svg class="a" style="left:586px;top:571px;" width="10" height="6" viewBox="0 0 10 6"><path d="M0.8 0.8l4.2 4 4.2-4" fill="none" stroke="#444" stroke-width="1.1"/></svg>
<svg class="a" style="left:609px;top:565px;" width="14" height="14" viewBox="0 0 14 14"><path d="M4.5 0.5h5v6.5h3.5L7 13.5 1 7h3.5z" fill="#1e6fe0" stroke="#0b4db5" stroke-width="0.6"/></svg>
<svg class="a" style="left:632px;top:565px;" width="14" height="14" viewBox="0 0 14 14"><path d="M4.5 13.5h5V7h3.5L7 0.5 1 7h3.5z" fill="#1e6fe0" stroke="#0b4db5" stroke-width="0.6"/></svg>
<div class="t" style="left:658.3px;top:566.0px;font-size:12px;letter-spacing:0.018px;">Настройки</div>
<svg class="a" style="left:723px;top:570px;" width="6" height="4" viewBox="0 0 6 4"><path d="M0 0h6l-3 3.5z" fill="#000"/></svg>
<div class="t" style="left:739.6px;top:566.0px;font-size:12px;letter-spacing:0.000px;color:#1a00ff;transform:scaleX(0.9493);transform-origin:0 0;">Текст не найден</div>
<svg class="a" style="left:519px;top:588px;" width="17" height="3" viewBox="0 0 17 3"><path d="M1 1h2M5 1h2M9 1h2M13 1h2" stroke="#555" stroke-width="1.2"/></svg>
<div class="a" style="left:831px;top:95px;width:535px;height:24px;background:linear-gradient(#ffffff,#f6f6f6 45%,#e3e3e3)"></div>
<svg class="a" style="left:835px;top:99.5px;" width="17" height="14" viewBox="0 0 17 14"><g stroke="#d8380e" stroke-width="2" stroke-linecap="round"><path d="M5.500 1.800v10.400M0.400 7h10.200M1.900 3.400l7.200 7.200M9.100 3.400l-7.200 7.200"/></g><circle cx="5.500" cy="7" r="2" fill="#f06a10"/><circle cx="5.500" cy="7" r="1.100" fill="#ffb000"/><path d="M13.600 3.800l2.800 3.400h-1.500v5h-2.600v-5h-1.500z" fill="#000"/></svg>
<div class="t" style="left:856.2px;top:101.2px;font-size:12px;letter-spacing:-0.042px;">Предыдущий</div>
<svg class="a" style="left:937px;top:99.5px;" width="17" height="14" viewBox="0 0 17 14"><g stroke="#d8380e" stroke-width="2" stroke-linecap="round"><path d="M5.500 1.800v10.400M0.400 7h10.200M1.900 3.400l7.200 7.200M9.100 3.400l-7.200 7.200"/></g><circle cx="5.500" cy="7" r="2" fill="#f06a10"/><circle cx="5.500" cy="7" r="1.100" fill="#ffb000"/><path d="M13.600 12.200l2.800-3.400h-1.500v-5h-2.600v5h-1.500z" fill="#000"/></svg>
<div class="t" style="left:958.6px;top:101.2px;font-size:12px;letter-spacing:-0.040px;">Следующий</div>
<div class="a" style="left:1033px;top:98px;width:1px;height:20px;background:#d0d0d0"></div>
<svg class="a" style="left:1041.5px;top:99.5px;" width="14" height="14" viewBox="0 0 14 14"><path d="M13.6 3.2l-2.4 2.4-2-.6-.6-2 2.4-2.4C9.2 0 7.2.4 6.2 1.8c-.8 1.1-.9 2.4-.5 3.6L.6 10.6c-.8.8-.8 2 0 2.8s2 .8 2.8 0l5.200-5.100c1.200.4 2.500.3 3.600-.5C13.600 6.800 14 4.800 13.600 3.200z" fill="#2b2b2b"/></svg>
<div class="t" style="left:1062.3px;top:101.2px;font-size:12px;letter-spacing:0.029px;">Настройки</div>
<svg class="a" style="left:1127px;top:105px;" width="6" height="4" viewBox="0 0 6 4"><path d="M0 0h6l-3 3.5z" fill="#000"/></svg>
<div class="a" style="left:831px;top:119px;width:535px;height:282px;background:#fff;border:1px solid #a0a0a0"></div>
<div class="t" style="left:843.1px;top:134.4px;font-size:12.5px;letter-spacing:-0.105px;">LEFT REAR TIRE COMPLETELY DISINTEGRATED WHILE</div>
<div class="t" style="left:1176.6px;top:134.4px;font-size:12.5px;letter-spacing:-0.078px;color:#f05a5a">DRIVEING</div>
<div class="t" style="left:1237.5px;top:134.4px;font-size:12.5px;letter-spacing:0.642px;font-style:italic;color:#0fb40f">&lt;driving&gt;</div>
<div class="t" style="left:1300.2px;top:134.4px;font-size:12.5px;letter-spacing:0.301px;">AT 30</div>
<div class="t" style="left:843.1px;top:150.4px;font-size:12.5px;letter-spacing:-0.153px;">MPH. TIRES WERE PART OF RECALL. VEHICLE WAS LEASED AND HAS BEEN</div>
<div class="t" style="left:843.1px;top:166.4px;font-size:12.5px;letter-spacing:-0.169px;">RETURNED SINCE. CONSUMER NOW DRIVES A</div>
<div class="a" style="left:1126.8px;top:164.7px;width:68.79999999999995px;height:14.5px;background:#ffd3c4"></div>
<div class="t" style="left:1127.3px;top:166.4px;font-size:12.5px;letter-spacing:0.662px;font-weight:bold;color:#f00000;text-decoration:underline">DIFERENT</div>
<div class="t" style="left:1196.5px;top:166.4px;font-size:12.5px;letter-spacing:0.703px;font-style:italic;color:#0fb40f">&lt;different&gt;</div>
<div class="t" style="left:1269.0px;top:166.4px;font-size:12.5px;letter-spacing:0.000px;transform:scaleX(0.9488);transform-origin:0 0;">FORD</div>
<div class="t" style="left:843.1px;top:182.4px;font-size:12.5px;letter-spacing:-0.054px;">EXPLORER WITH ATX TIRES AND HAS BEEN INFORMED ABOUT THE ONGOING</div>
<div class="t" style="left:843.1px;top:198.4px;font-size:12.5px;letter-spacing:0.137px;">INVESTIGATION.</div>
<svg class="a" style="left:1089px;top:402px;" width="17" height="3" viewBox="0 0 17 3"><path d="M1 1h2M5 1h2M9 1h2M13 1h2" stroke="#555" stroke-width="1.2"/></svg>
<div class="a" style="left:831px;top:407px;width:533px;height:280px;background:#ababab;border:1px solid #6a6a6a;border-left:2px solid #7d7d7d;border-right:none;border-bottom:none"></div>
<div class="a" style="left:1364px;top:408px;width:1px;height:279px;background:#fff"></div>
<div class="a" style="left:833px;top:408px;width:531px;height:21px;background:#fff"></div>
<div class="a" style="left:833px;top:429px;width:531px;height:15px;background:#d7e9fb"></div>
<div class="a" style="left:877px;top:409px;width:1px;height:20px;background:#e2e2e2"></div>
<div class="a" style="left:877px;top:429px;width:1px;height:15px;background:#c0c0c0"></div>
<div class="a" style="left:947px;top:409px;width:1px;height:20px;background:#e2e2e2"></div>
<div class="a" style="left:947px;top:429px;width:1px;height:15px;background:#c0c0c0"></div>
<div class="a" style="left:1157px;top:409px;width:1px;height:20px;background:#e2e2e2"></div>
<div class="a" style="left:1157px;top:429px;width:1px;height:15px;background:#c0c0c0"></div>
<svg class="a" style="left:838px;top:411px;" width="16" height="16" viewBox="0 0 16 16"><rect x="0.5" y="0.5" width="15" height="15" fill="#fff" stroke="#2f6f9f"/><path d="M0 2V0h2M14 0h2v2M16 14v2h-2M2 16H0v-2" stroke="#1d3f6a" fill="none"/><path d="M5 3.500h3.600v9.500H6.600V5.200H5z" fill="#1d3f6a"/><path d="M8.600 3.500h1.200v9.500h-1.200z" fill="#4f80ac"/></svg>
<div class="t" style="left:860.0px;top:416.3px;font-size:11.5px;letter-spacing:0.305px;">..</div>
<svg class="a" style="left:883px;top:411px;" width="16" height="16" viewBox="0 0 16 16"><rect x="0.5" y="0.5" width="15" height="15" fill="#fff" stroke="#2f6f9f"/><path d="M0 2V0h2M14 0h2v2M16 14v2h-2M2 16H0v-2" stroke="#1d3f6a" fill="none"/><path d="M5 3.500h3.600v9.500H6.600V5.200H5z" fill="#1d3f6a"/><path d="M8.600 3.500h1.200v9.500h-1.200z" fill="#4f80ac"/></svg>
<div class="t" style="left:904.0px;top:414.3px;font-size:11.5px;letter-spacing:0.000px;transform:scaleX(0.9028);transform-origin:0 0;">Freq...</div>
<svg class="a" style="left:953px;top:411px;" width="16" height="16" viewBox="0 0 16 16"><rect x="0.5" y="0.500" width="15" height="15" fill="#fff" stroke="#2f6f9f"/><path d="M0 2V0h2M14 0h2v2M16 14v2h-2M2 16H0v-2" stroke="#1d3f6a" fill="none"/><path d="M3.500 13V5.500c0-1.500.8-2.300 2.200-2.300s2.200.8 2.200 2.300V13M3.500 8.500h4.400" fill="none" stroke="#1d3f6a" stroke-width="1.500"/><path d="M9.500 6.500V13h3.200c1 0 1.500-.6 1.500-1.500s-.5-1.500-1.500-1.500H9.500" fill="none" stroke="#1d3f6a" stroke-width="1.300"/></svg>
<div class="t" style="left:973.5px;top:414.3px;font-size:11.5px;letter-spacing:0.000px;transform:scaleX(0.8195);transform-origin:0 0;">SUMMARY</div>
<svg class="a" style="left:1163px;top:411px;" width="16" height="16" viewBox="0 0 16 16"><rect x="0.5" y="0.500" width="15" height="15" fill="#fff" stroke="#2f6f9f"/><path d="M0 2V0h2M14 0h2v2M16 14v2h-2M2 16H0v-2" stroke="#1d3f6a" fill="none"/><path d="M3.500 13V5.500c0-1.500.8-2.300 2.200-2.300s2.200.8 2.200 2.300V13M3.500 8.500h4.400" fill="none" stroke="#1d3f6a" stroke-width="1.500"/><path d="M9.500 6.500V13h3.200c1 0 1.500-.6 1.500-1.500s-.5-1.500-1.500-1.500H9.500" fill="none" stroke="#1d3f6a" stroke-width="1.300"/></svg>
<div class="t" style="left:1183.5px;top:414.3px;font-size:11.5px;letter-spacing:0.000px;transform:scaleX(0.8231);transform-origin:0 0;">INJURY_TYPE</div>
<div class="t" style="left:839.5px;top:432.3px;font-size:11.5px;letter-spacing:0.000px;transform:scaleX(0.9034);transform-origin:0 0;">3 042</div>
<div class="t" style="right:428.5px;top:432.3px;font-size:11.5px;">1</div>
<div class="a" style="left:947px;top:428px;width:211px;height:17px;border:1px solid #e8141c"></div>
<div class="t" style="left:954.0px;top:432.0px;font-size:11.5px;letter-spacing:0.000px;transform:scaleX(0.8569);transform-origin:0 0;">CONSUMER NOW DRIVES A</div>
<div class="t" style="left:1090.7px;top:432.0px;font-size:11.5px;letter-spacing:0.000px;color:#e8141c;text-decoration:underline;transform:scaleX(0.8400);transform-origin:0 0;">DIFERENT</div>
<div class="a" style="left:1142px;top:430px;width:10.5px;height:15px;overflow:hidden"><div class="t" style="left:0.500px;top:2.400px;font-size:11.500px;letter-spacing:-0.3px">FORD</div></div>
<div class="a" style="left:831px;top:686px;width:535px;height:1px;background:#9a9a9a"></div>
<div class="a" style="left:832px;top:669px;width:534px;height:18px;background:#f0f0f0"></div>
<div class="a" style="left:831px;top:669px;width:1px;height:18px;background:#8a8a8a"></div>
<div class="t" style="left:838.0px;top:672.5px;font-size:11.7px;letter-spacing:-0.065px;">Запись</div>
<div class="a" style="left:883px;top:671px;width:15px;height:15px;background:#e1e1e1;border:1px solid #c4c4c4"></div>
<svg class="a" style="left:883px;top:671px;" width="15" height="15" viewBox="0 0 15 15"><path d="M4 3.500h1.600v8H4zM11 3.500v8l-4.500-4z" fill="#000"/></svg>
<div class="a" style="left:905px;top:671px;width:15px;height:15px;background:#e1e1e1;border:1px solid #c4c4c4"></div>
<svg class="a" style="left:905px;top:671px;" width="15" height="15" viewBox="0 0 15 15"><path d="M10 3.500v8l-4.500-4z" fill="#000"/></svg>
<div class="a" style="left:926px;top:670px;width:22px;height:17px;background:#fff;border:1px solid #9d9d9d"></div>
<div class="t" style="left:934.9px;top:674.3px;font-size:11.5px;letter-spacing:0.000px;transform:scaleX(0.6254);transform-origin:0 0;">1</div>
<div class="a" style="left:954px;top:671px;width:15px;height:15px;background:#e1e1e1;border:1px solid #c4c4c4"></div>
<svg class="a" style="left:954px;top:671px;" width="15" height="15" viewBox="0 0 15 15"><path d="M5.500 3.500v8l4.500-4z" fill="#000"/></svg>
<div class="a" style="left:976px;top:671px;width:15px;height:15px;background:#e1e1e1;border:1px solid #c4c4c4"></div>
<svg class="a" style="left:976px;top:671px;" width="15" height="15" viewBox="0 0 15 15"><path d="M9.600 3.500h1.600v8H9.600zM4.200 3.500v8l4.500-4z" fill="#000"/></svg>
<div class="t" style="left:997.3px;top:672.5px;font-size:11.5px;letter-spacing:0.000px;transform:scaleX(0.9066);transform-origin:0 0;">из 1</div>
<svg class="a" style="left:1028px;top:674px;" width="7" height="9" viewBox="0 0 7 9"><path d="M6 0.8L1.5 4.500 6 8.200" fill="none" stroke="#404040" stroke-width="1.500"/></svg>
<svg class="a" style="left:1352px;top:674px;" width="7" height="9" viewBox="0 0 7 9"><path d="M1 0.8L5.500 4.500 1 8.200" fill="none" stroke="#404040" stroke-width="1.500"/></svg>
<div class="a" style="left:1040px;top:671px;width:41px;height:15px;background:#cdcdcd"></div>
<div class="a" style="left:831px;top:687px;width:535px;height:1px;background:#a5a5a5"></div>
<div class="a" style="left:888px;top:688px;width:73px;height:24px;background:linear-gradient(#f4f4f4,#e0e0e0);border:1px solid #ababab;border-top:none;border-left:none"></div>
<div class="a" style="left:961px;top:688px;width:125px;height:24px;background:linear-gradient(#f4f4f4,#e0e0e0);border:1px solid #ababab;border-top:none;border-left:none"></div>
<div class="a" style="left:833px;top:688px;width:56px;height:24px;background:#f3f3f3;border:1px solid #ababab;border-top:none"></div>
<div class="t" style="left:838.0px;top:695.0px;font-size:11.8px;letter-spacing:-0.044px;font-weight:bold;">Данные</div>
<div class="t" style="left:894.5px;top:695.0px;font-size:11.5px;letter-spacing:-0.060px;">Статистика</div>
<div class="t" style="left:969.2px;top:695.0px;font-size:11.5px;letter-spacing:0.244px;">Уникальные записи</div>
<svg class="a" style="left:826px;top:397px;" width="4" height="16" viewBox="0 0 4 16"><path d="M1 1.500h2.200v1.200H2.200v1H1zM1 5.500h2.200v1.200H2.200v1H1zM1 9.500h2.200v1.200H2.200v1H1zM1 13.500h2.200v1.200H2.200v1H1z" fill="#5a5a5a"/></svg>
<div class="a" style="left:230px;top:600px;width:595px;height:113px;border:1px solid #dcdcdc"></div>
<div class="a" style="left:237px;top:594px;width:52px;height:12px;background:#f0f0f0"></div>
<div class="t" style="left:239.4px;top:594.0px;font-size:12px;letter-spacing:-0.181px;">Словари</div>
<div class="a" style="left:236px;top:613px;width:281px;height:96px;background:#fff;overflow:hidden;border-right:1px solid #8a8a8a">
<svg class="a" style="left:6px;top:6px" width="9" height="9"><rect x="0.500" y="0.500" width="8" height="8" fill="#fff" stroke="#7c7c7c"/><path d="M2 4.500h5M4.500 2v5" stroke="#000" stroke-width="1.200"/></svg>
<svg class="a" style="left:21px;top:3.7999999999999545px" width="17" height="12"><path d="M0.500 2.200Q0.500 1.500 1.200 1.500H6.500L7.500 0.500H13Q13.700 0.500 13.700 1.200V10.600H0.500Z" fill="#e4bc60" stroke="#c99a3a" stroke-width="0.500"/><rect x="7.800" y="1.200" width="4.600" height="1.300" fill="#fff"/><path d="M2.200 4.600H15.800L13.700 11.200H0.500Z" fill="#f7dc92" stroke="#c99a3a" stroke-width="0.500"/><path d="M2.800 5.300H14.800" stroke="#fbeab8" stroke-width="0.800"/></svg>
<div class="t" style="left:39.2px;top:4.8px;font-size:11.33px;letter-spacing:-0.035px;color:#000;font-weight:bold;">SpellChecks</div>
<div class="t" style="left:110.6px;top:4.8px;font-size:11.33px;letter-spacing:-0.259px;color:#000;">(1/1)</div>
<div class="t" style="left:135.9px;top:4.8px;font-size:11.33px;letter-spacing:-0.279px;color:#a0a0a0;text-decoration:underline;">Правка</div>
<div class="t" style="left:179.1px;top:4.8px;font-size:11.33px;letter-spacing:0.053px;color:#1414f0;text-decoration:underline;">Добавить</div>
<div class="t" style="left:237.6px;top:4.8px;font-size:11.33px;letter-spacing:-0.480px;color:#a0a0a0;text-decoration:underline;">Удалить</div>
<div class="a" style="left:2px;top:20px;width:279px;height:2px;background:linear-gradient(#8a8a8a 50%,#dedede 50%)"></div>
<svg class="a" style="left:6px;top:27px" width="9" height="9"><rect x="0.500" y="0.500" width="8" height="8" fill="#fff" stroke="#7c7c7c"/><path d="M2 4.500h5M4.500 2v5" stroke="#000" stroke-width="1.200"/></svg>
<svg class="a" style="left:21px;top:24.799999999999955px" width="17" height="12"><path d="M0.500 2.200Q0.500 1.500 1.200 1.500H6.500L7.500 0.500H13Q13.700 0.500 13.700 1.200V10.600H0.500Z" fill="#e4bc60" stroke="#c99a3a" stroke-width="0.500"/><rect x="7.800" y="1.200" width="4.600" height="1.300" fill="#fff"/><path d="M2.200 4.600H15.800L13.700 11.200H0.500Z" fill="#f7dc92" stroke="#c99a3a" stroke-width="0.500"/><path d="M2.800 5.300H14.800" stroke="#fbeab8" stroke-width="0.800"/></svg>
<div class="t" style="left:38.1px;top:25.8px;font-size:11.33px;letter-spacing:-0.046px;color:#000;font-weight:bold;">HumanNames</div>
<div class="t" style="left:117.6px;top:25.8px;font-size:11.33px;letter-spacing:-0.259px;color:#000;">(0/2)</div>
<div class="t" style="left:143.1px;top:25.8px;font-size:11.33px;letter-spacing:-0.379px;color:#a0a0a0;text-decoration:underline;">Правка</div>
<div class="t" style="left:186.4px;top:25.8px;font-size:11.33px;letter-spacing:0.003px;color:#1414f0;text-decoration:underline;">Добавить</div>
<div class="t" style="left:244.6px;top:25.8px;font-size:11.33px;letter-spacing:-0.465px;color:#a0a0a0;text-decoration:underline;">Удалить</div>
<div class="a" style="left:2px;top:41px;width:279px;height:2px;background:linear-gradient(#8a8a8a 50%,#dedede 50%)"></div>
<svg class="a" style="left:6px;top:48px" width="9" height="9"><rect x="0.500" y="0.500" width="8" height="8" fill="#fff" stroke="#7c7c7c"/><path d="M2 4.500h5M4.500 2v5" stroke="#000" stroke-width="1.200"/></svg>
<svg class="a" style="left:21px;top:45.799999999999955px" width="17" height="12"><path d="M0.500 2.200Q0.500 1.500 1.200 1.500H6.500L7.500 0.500H13Q13.700 0.500 13.700 1.200V10.600H0.500Z" fill="#e4bc60" stroke="#c99a3a" stroke-width="0.500"/><rect x="7.800" y="1.200" width="4.600" height="1.300" fill="#fff"/><path d="M2.200 4.600H15.800L13.700 11.200H0.500Z" fill="#f7dc92" stroke="#c99a3a" stroke-width="0.500"/><path d="M2.800 5.300H14.800" stroke="#fbeab8" stroke-width="0.800"/></svg>
<div class="t" style="left:38.1px;top:46.8px;font-size:11.33px;letter-spacing:0.033px;color:#000;font-weight:bold;">Morphology*</div>
<div class="t" style="left:111.7px;top:46.8px;font-size:11.33px;letter-spacing:-0.259px;color:#000;">(1/1)</div>
<div class="t" style="left:137.0px;top:46.8px;font-size:11.33px;letter-spacing:-0.312px;color:#a0a0a0;text-decoration:underline;">Правка</div>
<div class="t" style="left:180.2px;top:46.8px;font-size:11.33px;letter-spacing:0.053px;color:#1414f0;text-decoration:underline;">Добавить</div>
<div class="t" style="left:238.4px;top:46.8px;font-size:11.33px;letter-spacing:-0.465px;color:#a0a0a0;text-decoration:underline;">Удалить</div>
<div class="a" style="left:2px;top:62px;width:279px;height:2px;background:linear-gradient(#8a8a8a 50%,#dedede 50%)"></div>
<svg class="a" style="left:6px;top:69px" width="9" height="9"><rect x="0.500" y="0.500" width="8" height="8" fill="#fff" stroke="#7c7c7c"/><path d="M2 4.500h5M4.500 2v5" stroke="#000" stroke-width="1.200"/></svg>
<svg class="a" style="left:21px;top:66.79999999999995px" width="17" height="12"><path d="M0.500 2.200Q0.500 1.500 1.200 1.500H6.500L7.500 0.500H13Q13.700 0.500 13.700 1.200V10.600H0.500Z" fill="#e4bc60" stroke="#c99a3a" stroke-width="0.500"/><rect x="7.800" y="1.200" width="4.600" height="1.300" fill="#fff"/><path d="M2.200 4.600H15.800L13.700 11.200H0.500Z" fill="#f7dc92" stroke="#c99a3a" stroke-width="0.500"/><path d="M2.800 5.300H14.800" stroke="#fbeab8" stroke-width="0.800"/></svg>
<div class="t" style="left:39.2px;top:67.8px;font-size:11.33px;letter-spacing:-0.124px;color:#000;font-weight:bold;">StopLists</div>
<div class="t" style="left:94.6px;top:67.8px;font-size:11.33px;letter-spacing:-0.219px;color:#000;">(1/1)</div>
<div class="t" style="left:126.0px;top:67.8px;font-size:11.33px;letter-spacing:-0.345px;color:#a0a0a0;text-decoration:underline;">Правка</div>
<div class="t" style="left:169.2px;top:67.8px;font-size:11.33px;letter-spacing:0.066px;color:#1414f0;text-decoration:underline;">Добавить</div>
<div class="t" style="left:227.4px;top:67.8px;font-size:11.33px;letter-spacing:-0.337px;color:#a0a0a0;text-decoration:underline;">Удалить</div>
<div class="a" style="left:2px;top:83px;width:279px;height:2px;background:linear-gradient(#8a8a8a 50%,#dedede 50%)"></div>
<svg class="a" style="left:6px;top:90px" width="9" height="9"><rect x="0.500" y="0.500" width="8" height="8" fill="#fff" stroke="#7c7c7c"/><path d="M2 4.500h5M4.500 2v5" stroke="#000" stroke-width="1.200"/></svg>
<svg class="a" style="left:21px;top:87.79999999999995px" width="17" height="12"><path d="M0.500 2.200Q0.500 1.500 1.200 1.500H6.500L7.500 0.500H13Q13.700 0.500 13.700 1.200V10.600H0.500Z" fill="#e4bc60" stroke="#c99a3a" stroke-width="0.500"/><rect x="7.800" y="1.200" width="4.600" height="1.300" fill="#fff"/><path d="M2.200 4.600H15.800L13.700 11.200H0.500Z" fill="#f7dc92" stroke="#c99a3a" stroke-width="0.500"/><path d="M2.800 5.300H14.800" stroke="#fbeab8" stroke-width="0.800"/></svg>
<div class="t" style="left:39.2px;top:88.8px;font-size:11.33px;letter-spacing:-0.162px;color:#000;font-weight:bold;">Synonyms</div>
<div class="t" style="left:99.6px;top:88.8px;font-size:11.33px;letter-spacing:-0.259px;color:#000;">(1/1)</div>
<div class="t" style="left:126.0px;top:88.8px;font-size:11.33px;letter-spacing:-0.345px;color:#a0a0a0;text-decoration:underline;">Правка</div>
<div class="t" style="left:169.2px;top:88.8px;font-size:11.33px;letter-spacing:0.066px;color:#1414f0;text-decoration:underline;">Добавить</div>
<div class="t" style="left:227.4px;top:88.8px;font-size:11.33px;letter-spacing:-0.465px;color:#a0a0a0;text-decoration:underline;">Удалить</div>
</div>
<div class="a" style="left:521px;top:613px;width:281px;height:96px;background:#fff;overflow:hidden;border-left:1px solid #c8c8c8;border-right:1px solid #8a8a8a">
<svg class="a" style="left:5px;top:6px" width="9" height="9"><rect x="0.500" y="0.500" width="8" height="8" fill="#fff" stroke="#8c8c8c"/><path d="M2 4.500h5" stroke="#8c8c8c" stroke-width="1.200"/></svg>
<svg class="a" style="left:19.5px;top:3.7999999999999545px" width="17" height="12"><path d="M0.500 2.200Q0.500 1.500 1.200 1.500H6.500L7.500 0.500H13Q13.700 0.500 13.700 1.200V10.600H0.500Z" fill="#a4a4a4" stroke="#6c6c6c" stroke-width="0.500"/><rect x="7.800" y="1.200" width="4.600" height="1.300" fill="#fff"/><path d="M2.200 4.600H15.800L13.700 11.200H0.500Z" fill="#d6d6d6" stroke="#6c6c6c" stroke-width="0.500"/><path d="M2.800 5.300H14.800" stroke="#ececec" stroke-width="0.800"/></svg>
<div class="t" style="left:37.3px;top:4.8px;font-size:11.33px;letter-spacing:0.114px;color:#767676;font-weight:bold;">Companies</div>
<div class="t" style="left:103.6px;top:4.8px;font-size:11.33px;letter-spacing:-0.099px;color:#808080;">(0/0)</div>
<div class="t" style="left:128.7px;top:4.8px;font-size:11.33px;letter-spacing:-0.212px;color:#9a9a9a;text-decoration:underline;">Правка</div>
<div class="t" style="left:172.0px;top:4.8px;font-size:11.33px;letter-spacing:0.041px;color:#9a9a9a;text-decoration:underline;">Добавить</div>
<div class="t" style="left:230.1px;top:4.8px;font-size:11.33px;letter-spacing:-0.251px;color:#9a9a9a;text-decoration:underline;">Удалить</div>
<div class="a" style="left:2px;top:20px;width:279px;height:2px;background:linear-gradient(#8a8a8a 50%,#dedede 50%)"></div>
<svg class="a" style="left:5px;top:27px" width="9" height="9"><rect x="0.500" y="0.500" width="8" height="8" fill="#fff" stroke="#8c8c8c"/><path d="M2 4.500h5" stroke="#8c8c8c" stroke-width="1.200"/></svg>
<svg class="a" style="left:19.5px;top:24.799999999999955px" width="17" height="12"><path d="M0.500 2.200Q0.500 1.500 1.200 1.500H6.500L7.500 0.500H13Q13.700 0.500 13.700 1.200V10.600H0.500Z" fill="#a4a4a4" stroke="#6c6c6c" stroke-width="0.500"/><rect x="7.800" y="1.200" width="4.600" height="1.300" fill="#fff"/><path d="M2.200 4.600H15.800L13.700 11.200H0.500Z" fill="#d6d6d6" stroke="#6c6c6c" stroke-width="0.500"/><path d="M2.800 5.300H14.800" stroke="#ececec" stroke-width="0.800"/></svg>
<div class="t" style="left:37.3px;top:25.8px;font-size:11.33px;letter-spacing:0.068px;color:#767676;font-weight:bold;">GeoAdministrative</div>
<div class="t" style="left:143.9px;top:25.8px;font-size:11.33px;letter-spacing:-0.199px;color:#808080;">(0/0)</div>
<div class="t" style="left:168.5px;top:25.8px;font-size:11.33px;letter-spacing:-0.212px;color:#9a9a9a;text-decoration:underline;">Правка</div>
<div class="t" style="left:211.9px;top:25.8px;font-size:11.33px;letter-spacing:0.091px;color:#9a9a9a;text-decoration:underline;">Добавить</div>
<div class="t" style="left:270.0px;top:25.8px;font-size:11.33px;letter-spacing:-0.323px;color:#9a9a9a;text-decoration:underline;">Удалить</div>
<div class="a" style="left:2px;top:41px;width:279px;height:2px;background:linear-gradient(#8a8a8a 50%,#dedede 50%)"></div>
<svg class="a" style="left:5px;top:48px" width="9" height="9"><rect x="0.500" y="0.500" width="8" height="8" fill="#fff" stroke="#8c8c8c"/><path d="M2 4.500h5" stroke="#8c8c8c" stroke-width="1.200"/></svg>
<svg class="a" style="left:19.5px;top:45.799999999999955px" width="17" height="12"><path d="M0.500 2.200Q0.500 1.500 1.200 1.500H6.500L7.500 0.500H13Q13.700 0.500 13.700 1.200V10.600H0.500Z" fill="#a4a4a4" stroke="#6c6c6c" stroke-width="0.500"/><rect x="7.800" y="1.200" width="4.600" height="1.300" fill="#fff"/><path d="M2.200 4.600H15.800L13.700 11.200H0.500Z" fill="#d6d6d6" stroke="#6c6c6c" stroke-width="0.500"/><path d="M2.800 5.300H14.800" stroke="#ececec" stroke-width="0.800"/></svg>
<div class="t" style="left:37.3px;top:46.8px;font-size:11.33px;letter-spacing:-0.042px;color:#767676;font-weight:bold;">Organizations</div>
<div class="t" style="left:116.5px;top:46.8px;font-size:11.33px;letter-spacing:-0.119px;color:#808080;">(0/0)</div>
<div class="t" style="left:141.6px;top:46.8px;font-size:11.33px;letter-spacing:-0.212px;color:#9a9a9a;text-decoration:underline;">Правка</div>
<div class="t" style="left:184.9px;top:46.8px;font-size:11.33px;letter-spacing:0.091px;color:#9a9a9a;text-decoration:underline;">Добавить</div>
<div class="t" style="left:243.0px;top:46.8px;font-size:11.33px;letter-spacing:-0.323px;color:#9a9a9a;text-decoration:underline;">Удалить</div>
<div class="a" style="left:2px;top:62px;width:279px;height:2px;background:linear-gradient(#8a8a8a 50%,#dedede 50%)"></div>
<svg class="a" style="left:5px;top:69px" width="9" height="9"><rect x="0.500" y="0.500" width="8" height="8" fill="#fff" stroke="#8c8c8c"/><path d="M2 4.500h5" stroke="#8c8c8c" stroke-width="1.200"/></svg>
<svg class="a" style="left:19.5px;top:66.79999999999995px" width="17" height="12"><path d="M0.500 2.200Q0.500 1.500 1.200 1.500H6.500L7.500 0.500H13Q13.700 0.500 13.700 1.200V10.600H0.500Z" fill="#a4a4a4" stroke="#6c6c6c" stroke-width="0.500"/><rect x="7.800" y="1.200" width="4.600" height="1.300" fill="#fff"/><path d="M2.200 4.600H15.800L13.700 11.200H0.500Z" fill="#d6d6d6" stroke="#6c6c6c" stroke-width="0.500"/><path d="M2.800 5.300H14.800" stroke="#ececec" stroke-width="0.800"/></svg>
<div class="t" style="left:38.0px;top:67.8px;font-size:11.33px;letter-spacing:-0.042px;color:#767676;font-weight:bold;">Semantics</div>
<div class="t" style="left:98.7px;top:67.8px;font-size:11.33px;letter-spacing:-0.199px;color:#808080;">(0/0)</div>
<div class="t" style="left:168.0px;top:67.8px;font-size:11.33px;letter-spacing:0.041px;color:#9a9a9a;text-decoration:underline;">Добавить</div>
<div class="t" style="left:225.9px;top:67.8px;font-size:11.33px;letter-spacing:-0.223px;color:#9a9a9a;text-decoration:underline;">Удалить</div>
<div class="a" style="left:2px;top:83px;width:279px;height:2px;background:linear-gradient(#8a8a8a 50%,#dedede 50%)"></div>
<svg class="a" style="left:5px;top:90px" width="9" height="9"><rect x="0.500" y="0.500" width="8" height="8" fill="#fff" stroke="#8c8c8c"/><path d="M2 4.500h5" stroke="#8c8c8c" stroke-width="1.200"/></svg>
<svg class="a" style="left:19.5px;top:87.79999999999995px" width="17" height="12"><path d="M0.500 2.200Q0.500 1.500 1.200 1.500H6.500L7.500 0.500H13Q13.700 0.500 13.700 1.200V10.600H0.500Z" fill="#a4a4a4" stroke="#6c6c6c" stroke-width="0.500"/><rect x="7.800" y="1.200" width="4.600" height="1.300" fill="#fff"/><path d="M2.200 4.600H15.800L13.700 11.200H0.500Z" fill="#d6d6d6" stroke="#6c6c6c" stroke-width="0.500"/><path d="M2.800 5.300H14.800" stroke="#ececec" stroke-width="0.800"/></svg>
<div class="t" style="left:37.3px;top:88.8px;font-size:11.33px;letter-spacing:0.102px;color:#767676;font-weight:bold;">WordClasses</div>
<div class="t" style="left:114.6px;top:88.8px;font-size:11.33px;letter-spacing:-0.199px;color:#808080;">(0/0)</div>
<div class="t" style="left:139.2px;top:88.8px;font-size:11.33px;letter-spacing:-0.212px;color:#9a9a9a;text-decoration:underline;">Правка</div>
<div class="t" style="left:182.6px;top:88.8px;font-size:11.33px;letter-spacing:0.041px;color:#9a9a9a;text-decoration:underline;">Добавить</div>
<div class="t" style="left:241.1px;top:88.8px;font-size:11.33px;letter-spacing:-0.337px;color:#9a9a9a;text-decoration:underline;">Удалить</div>
</div>
<div class="a" style="left:803px;top:613px;width:16px;height:96px;background:#f0f0f0"></div>
<div class="a" style="left:804px;top:630px;width:14px;height:51px;background:#c9c9c9"></div>
<svg class="a" style="left:806px;top:619px;" width="9" height="6" viewBox="0 0 9 6"><path d="M1 5l3.500-3.800L8 5" fill="none" stroke="#404040" stroke-width="1.500"/></svg>
<svg class="a" style="left:806px;top:697px;" width="9" height="6" viewBox="0 0 9 6"><path d="M1 1l3.500 3.800L8 1" fill="none" stroke="#404040" stroke-width="1.500"/></svg>
<div class="a" style="left:0px;top:715px;width:1366px;height:1px;background:#dadada"></div>
<div class="a" style="left:417px;top:718px;width:1px;height:19px;background:#d4d4d4"></div>
<div class="a" style="left:631px;top:718px;width:1px;height:19px;background:#d4d4d4"></div>
<div class="a" style="left:845px;top:718px;width:1px;height:19px;background:#d4d4d4"></div>
<div class="a" style="left:1058px;top:718px;width:1px;height:19px;background:#d4d4d4"></div>
<div class="t" style="left:422.5px;top:722.2px;font-size:12px;letter-spacing:0.000px;transform:scaleX(0.9428);transform-origin:0 0;">Отправлено: 34,92 MB (36 618 556 b...</div>
<div class="t" style="left:635.5px;top:722.2px;font-size:12px;letter-spacing:-0.204px;">Получено: 40,98 MB (42 967 979 byt...</div>
<div class="t" style="left:850.6px;top:722.2px;font-size:12px;letter-spacing:0.017px;">Профиль: administrator</div>
<div class="t" style="left:1064.0px;top:722.2px;font-size:12px;letter-spacing:-0.109px;">Соединение: localhost</div>
<div class="a" style="left:1273px;top:717px;width:1px;height:20px;background:#d0d0d0"></div>
<svg class="a" style="left:1278px;top:722px;" width="16" height="13" viewBox="0 0 16 13"><path d="M1.5 12V1.500c0-.6 3.300-1.300 4.800.6 1 1.300-.5 2.800-2.500 2.800H1.500" fill="none" stroke="#111" stroke-width="1.600"/><ellipse cx="10.800" cy="3" rx="3" ry="2.200" fill="none" stroke="#111" stroke-width="1.500"/></svg>
<div class="a" style="left:1298px;top:719px;width:16px;height:16px;background:#fff;border:1.5px solid #3fb34a;border-radius:2px"></div>
<div class="a" style="left:1299px;top:729px;width:14px;height:5px;background:#3fb34a"></div>
<div class="t" style="left:1300.3px;top:722px;font-size:10px;letter-spacing:-0.5px;color:#2a3a4a">49</div>
<svg class="a" style="left:1318px;top:719px;" width="17" height="16" viewBox="0 0 17 16"><rect x="3" y="1" width="11" height="13" rx="2" fill="none" stroke="#6a6a6a" stroke-width="1"/><rect x="0.500" y="4" width="5" height="7.500" rx="1.500" fill="#8a8a8a" stroke="#666" stroke-width="0.500"/><rect x="11.500" y="4" width="5" height="7.500" rx="1.500" fill="#8a8a8a" stroke="#666" stroke-width="0.500"/></svg>
<div class="a" style="left:0px;top:738px;width:1366px;height:30px;background:linear-gradient(90deg,#1f2f3a 0,#1f2f3a 60%,#1b2a46 78%,#1a2847 100%)"></div>
<svg class="a" style="left:10px;top:744.5px;" width="16" height="17" viewBox="0 0 16 17"><path d="M0 2.400L6.600 1.500V8H0zM7.400 1.400L16 0.200V8H7.400zM0 8.800h6.600v6.500L0 14.400zM7.400 8.800H16v7.800l-8.600-1.200z" fill="#fff"/></svg>
<svg class="a" style="left:44px;top:743px;" width="20" height="19" viewBox="0 0 20 19"><circle cx="13" cy="6.500" r="4.800" fill="none" stroke="#fff" stroke-width="1.500"/><path d="M9.600 10L2.200 17.500" stroke="#fff" stroke-width="1.600"/></svg>
<svg class="a" style="left:82px;top:745px;" width="16" height="16" viewBox="0 0 16 16"><circle cx="8" cy="8" r="6.300" fill="none" stroke="#fff" stroke-width="2.200"/></svg>
<svg class="a" style="left:118px;top:745px;" width="17" height="16" viewBox="0 0 17 16"><path d="M0.500 1h12M0.500 14.500h12M1.700 3.800h9.600v8H1.700zM15 0.300v2.200M15 4.800v6.400M15 13.300v2.200" fill="none" stroke="#fff" stroke-width="1.700"/></svg>
<svg class="a" style="left:156px;top:744.5px;" width="17" height="17" viewBox="0 0 17 17"><defs><linearGradient id="eg" x1="0" y1="0" x2="1" y2="1"><stop offset="0" stop-color="#35c1f1"/><stop offset=".5" stop-color="#1b9de2"/><stop offset="1" stop-color="#0c59a4"/></linearGradient></defs><circle cx="8.500" cy="8.500" r="8.200" fill="url(#eg)"/><path d="M16.600 7.500C16 3.500 12.500.3 8.500.3 5 .3 2.200 2.300 1 5.200c2-2 5.200-2.300 7.200-1 1.600 1 2 2.600 1.300 3.800 2.500-.5 5 .1 7.100-.5z" fill="#4bd66a" opacity=".9"/><path d="M6.500 8.800c-.5 2.500 1.200 5.200 4.500 5.500 1.800.2 3.500-.4 4.500-1.300-1.200 2.500-3.800 3.900-6.500 3.600-3.800-.3-6.200-3.800-5.200-7 .6-1.700 2.200-2.500 2.700-.8z" fill="#0a3f8a"/></svg>
<svg class="a" style="left:194px;top:744.5px;" width="16" height="17" viewBox="0 0 16 17"><path d="M4.500 4.500V3c0-1.500 1.300-2.500 3.500-2.500s3.500 1 3.500 2.500v1.500" fill="none" stroke="#fff" stroke-width="1.300"/><path d="M0.500 4.500h15v12h-15z" fill="#fff"/><rect x="4.200" y="7.200" width="3.300" height="3.300" fill="#f25022"/><rect x="8.500" y="7.200" width="3.300" height="3.300" fill="#7fba00"/><rect x="4.200" y="11.500" width="3.300" height="3.300" fill="#00a4ef"/><rect x="8.500" y="11.500" width="3.300" height="3.300" fill="#ffb900"/></svg>
<svg class="a" style="left:230px;top:745px;" width="17" height="15" viewBox="0 0 17 15"><path d="M0.500 5.500L8.500 0.200l8 5.300v9h-16z" fill="#1f8ad8"/><path d="M1.500 5.800h14L8.500 11z" fill="#fff"/><path d="M0.500 5.500v9h16v-9l-8 6z" fill="#2fa0ec"/></svg>
<svg class="a" style="left:267px;top:746px;" width="17" height="14" viewBox="0 0 17 14"><path d="M0.500 1.500c0-.6.400-1 1-1h4.500l1.500 1.500h8c.600 0 1 .4 1 1v10.500h-16z" fill="#f5c543"/><path d="M0.500 4.500h16v9h-16z" fill="#fbd667"/><path d="M4 9h9v5h-2.500v-2.500h-4V14H4z" fill="#3d8fd6"/></svg>
<svg class="a" style="left:303.5px;top:745.5px;" width="15" height="15" viewBox="0 0 15 15"><path d="M4.200 0.300c1 0 1.800.3 2.400.6 3.500-.5 6.800 2 7.300 5.600.1.700.1 1.400 0 2 .5.700.8 1.600.8 2.500 0 2.200-1.800 4-4 4-.9 0-1.700-.3-2.400-.7C4.800 14.800 1.500 12.300 1 8.700c-.1-.7-.1-1.300 0-2C.5 6 .3 5.200.3 4.300c0-2.200 1.700-4 3.900-4z" fill="#1db1ed"/><path d="M10 5.200c-.5-.8-1.400-1.200-2.500-1.200-1.500 0-2.600.8-2.600 1.900 0 2.600 5.300 1.300 5.300 3.500 0 1-1 1.800-2.600 1.800-1.300 0-2.400-.5-2.900-1.500" fill="none" stroke="#fff" stroke-width="1.500" stroke-linecap="round"/></svg>
<div class="t" style="left:323.0px;top:747.0px;font-size:12px;letter-spacing:0.000px;color:#fff;transform:scaleX(0.9385);transform-origin:0 0;">Skype</div>
<svg class="a" style="left:452px;top:745.5px;" width="15" height="15" viewBox="0 0 15 15"><circle cx="7.500" cy="7.500" r="7.400" fill="#2ba3df"/><path d="M3 7.400l8.600-3.400c.4-.1.700.1.600.7l-1.500 6.900c-.1.500-.4.600-.8.400L7.700 10.300l-1.100 1.100c-.1.100-.3.200-.500.200l.2-2.300 4.200-3.800c.2-.2 0-.3-.3-.1L5 8.700 2.900 8c-.5-.1-.5-.4.100-.6z" fill="#fff"/></svg>
<div class="t" style="left:473.0px;top:747.0px;font-size:12px;letter-spacing:0.000px;color:#fff;transform:scaleX(0.9320);transform-origin:0 0;">Telegram</div>
<svg class="a" style="left:600.5px;top:745.5px;" width="15" height="15" viewBox="0 0 15 15"><circle cx="7.500" cy="7.500" r="7.300" fill="#fbc116"/><path d="M7.500 7.500L1.200 3.800A7.300 7.300 0 0 1 13.800 3.800z" fill="#e33b2e"/><path d="M7.500 7.500L1.200 3.800A7.300 7.300 0 0 0 6.200 14.700l3-4z" fill="#2da94f"/><path d="M7.500 4.200h6.500" stroke="#e33b2e" stroke-width="0"/><circle cx="7.500" cy="7.500" r="3.400" fill="#fff"/><circle cx="7.500" cy="7.500" r="2.600" fill="#4587f3"/></svg>
<div class="t" style="left:620.0px;top:747.0px;font-size:12px;letter-spacing:0.000px;color:#fff;transform:scaleX(0.9422);transform-origin:0 0;">04_data_preparatio...</div>
<svg class="a" style="left:748px;top:745px;" width="16" height="16" viewBox="0 0 16 16"><path d="M7 3C3 3 .3 5.500.3 9c0 3 2.200 5.300 5 5.300 1.500 0 1.700-1 1.500-1.800-.3-1 .5-1.800 1.500-1.800h2c2 0 3-1.500 3-3C13.300 5 10.500 3 7 3z" fill="#e8edf2" stroke="#9aa8b8" stroke-width="0.500"/><circle cx="3.300" cy="8" r="1.200" fill="#e33"/><circle cx="5.500" cy="5.500" r="1.200" fill="#f5b400"/><circle cx="8.800" cy="5.300" r="1.200" fill="#3a8"/><circle cx="3.800" cy="11" r="1.200" fill="#38d"/><path d="M13.600 0.500l1 .3-2.200 9.500-1.400 1.500-.3-2z" fill="#f0a030" stroke="#c87810" stroke-width="0.400"/><path d="M13.300 0l1.700.5-.4 2-1.700-.5z" fill="#e8c890"/></svg>
<div class="t" style="left:768.0px;top:747.0px;font-size:12px;letter-spacing:-0.196px;color:#fff">nhtsa41.rus - Paint</div>
<div class="a" style="left:888px;top:738px;width:147px;height:28px;background:#4b5a67"></div>
<svg class="a" style="left:893.5px;top:741px;" width="20" height="20" viewBox="0 0 20 20"><circle cx="9.500" cy="10.800" r="6.400" fill="#d40000"/><path d="M9.500 10.800L5.700 5.600A6.400 6.400 0 0 1 10.200 4.400z" fill="#f4f000"/><path d="M9.500 10.800L6.300 5.200A6.400 6.400 0 0 1 10.500 4.500z" fill="#fff400"/><path d="M9.500 10.800L10.600 4.500A6.400 6.400 0 0 1 15.600 8.800z" fill="#1a10e0"/><path d="M9.500 10.800L13.500 15.800A6.400 6.400 0 0 1 7.300 16.800z" fill="#10e010"/><path d="M2.100 7.200L4.800 6.600 8.600 8.900 11.800 10.600 12.600 8.400 13.600 8 14.300 10.400 16 11.600 18 13.200 17.600 14.400 15.400 14.800 13.600 16.600 12 16 11.400 13.800 9.200 12.400 6.400 11.600 4.600 12.800 2.300 12.400Z" fill="#f59a23"/><path d="M5.800 12l1-1.200" stroke="#b86a10" stroke-width="0.600"/><circle cx="15.400" cy="13.400" r="0.750" fill="#fff"/><circle cx="16.600" cy="12.400" r="0.700" fill="#1a1208"/><circle cx="12.400" cy="15.400" r="0.600" fill="#1a1208"/><path d="M12.800 10.600l.5-1.800" stroke="#a8620c" stroke-width="0.700"/></svg>
<div class="t" style="left:916.0px;top:747.0px;font-size:12px;letter-spacing:-0.183px;color:#fff">NHTSA-rus* - Ана...</div>
<div class="a" style="left:297px;top:766px;width:141.5px;height:2px;background:#76b9ed"></div>
<div class="a" style="left:448px;top:766px;width:138.5px;height:2px;background:#76b9ed"></div>
<div class="a" style="left:595.5px;top:766px;width:139.0px;height:2px;background:#76b9ed"></div>
<div class="a" style="left:743.8px;top:766px;width:138.70000000000005px;height:2px;background:#76b9ed"></div>
<div class="a" style="left:888px;top:766px;width:146.5px;height:2px;background:#76b9ed"></div>
<svg class="a" style="left:1042px;top:747px;" width="17" height="13" viewBox="0 0 17 13"><path d="M1 8l2-3h10l2 3v4H1z" fill="#e8e0d0" stroke="#b0a890" stroke-width="0.600"/><rect x="5" y="0.500" width="6" height="6" rx="1" fill="#f0a830"/><rect x="6.500" y="1.500" width="3" height="4" fill="#ffe090"/><rect x="3" y="9.500" width="10" height="1.500" fill="#fff"/></svg>
<svg class="a" style="left:1066px;top:745.5px;" width="15" height="15" viewBox="0 0 15 15"><rect x="0.300" y="0.300" width="14.400" height="14.400" rx="5" fill="#7ab81e"/><path d="M4 7.800l2.500 2.400L11 5.500" fill="none" stroke="#fff" stroke-width="1.800"/></svg>
<svg class="a" style="left:1090px;top:745.5px;" width="15" height="15" viewBox="0 0 15 15"><circle cx="7.500" cy="7.500" r="7.400" fill="#2ba3df"/><path d="M3 7.400l8.600-3.400c.4-.1.700.1.600.7l-1.500 6.900c-.1.500-.4.600-.8.400L7.700 10.300l-1.100 1.100c-.1.100-.3.200-.500.200l.2-2.300 4.200-3.800c.2-.2 0-.3-.3-.1L5 8.700 2.900 8c-.5-.1-.5-.4.100-.6z" fill="#fff"/></svg>
<svg class="a" style="left:1113.5px;top:745px;" width="16" height="16" viewBox="0 0 16 16"><rect x="0.500" y="0.500" width="15" height="15" rx="1.500" fill="#2f8fe0" stroke="#8ec8f8" stroke-width="0.800"/><rect x="3" y="3" width="6" height="4.500" fill="none" stroke="#fff" stroke-width="0.900"/><rect x="7" y="8" width="6" height="4.500" fill="none" stroke="#fff" stroke-width="0.900"/><path d="M1 12l4-2 4 3 6-4v6.500H1z" fill="#e8c040" opacity=".9"/></svg>
<svg class="a" style="left:1138px;top:745px;" width="16" height="16" viewBox="0 0 16 16"><path d="M7 0.500C5 1.500 3 2 0.800 2v6c0 3.500 2.700 6 6.200 7.500 3.500-1.500 6.200-4 6.200-7.500V2C11 2 9 1.500 7 .5z" fill="#fff" stroke="#fff" stroke-width="1"/><path d="M7 1C5.200 1.800 3.200 2.300 1.300 2.400V7.500H7zM7 7.500V15c3.200-1.500 5.700-3.700 5.700-7V7.500z" fill="#fff"/><path d="M7 1v6.500h5.700V2.400C10.800 2.300 8.800 1.800 7 1zM7 7.500H1.300V8c0 3.300 2.500 5.500 5.700 7z" fill="#101828"/><circle cx="11.800" cy="12" r="3.800" fill="#18a048"/><path d="M9.800 12l1.500 1.500 2.600-2.800" fill="none" stroke="#fff" stroke-width="1.200"/></svg>
<svg class="a" style="left:1161px;top:746px;" width="17" height="14" viewBox="0 0 17 14"><path d="M1 0.700h6v5H1zM4.500 3.500h11.800v7.500H4.500zM10.400 11v2.300M7 13.500h7" fill="none" stroke="#fff" stroke-width="1.200"/></svg>
<svg class="a" style="left:1185px;top:745.5px;" width="17" height="15" viewBox="0 0 17 15"><path d="M1 5h2.800L7 1.800v11.400L3.800 10H1z" fill="none" stroke="#fff" stroke-width="1.100"/><path d="M9 5.200c1 1.300 1 3.300 0 4.600M11.300 3.500c1.800 2.300 1.800 5.700 0 8M13.600 2c2.500 3.200 2.500 7.800 0 11" fill="none" stroke="#fff" stroke-width="1.100"/></svg>
<svg class="a" style="left:1213px;top:744.5px;" width="18" height="17" viewBox="0 0 18 17"><path d="M12.500 1c1-.8 2.500.5 1.800 1.600L7 14l-2.500 1.500.5-2.800zM6 15c-1.500 1.500-4 1.300-4.800-.5-.7-1.700.5-3.200 2.300-3.500M12 9.500c1.500-1.300 3.500-.8 4 .8.300 1-.3 2-1.500 2.300" fill="none" stroke="#fff" stroke-width="1.300"/></svg>
<div class="t" style="left:1244.4px;top:747.5px;font-size:12px;letter-spacing:0.000px;color:#fff;transform:scaleX(0.8537);transform-origin:0 0;">ENG</div>
<div class="t" style="left:1280.7px;top:747.5px;font-size:12px;letter-spacing:0.000px;color:#fff;transform:scaleX(0.9026);transform-origin:0 0;">11:46</div>
<svg class="a" style="left:1325px;top:745px;" width="17" height="16" viewBox="0 0 17 16"><path d="M0 0h16.500v12.500H10.500L8.200 15.500 6 12.500H0z" fill="#fff"/><path d="M3.500 3.500h9.500M3.500 6.300h9.500M3.500 9.100h6" stroke="#1a2847" stroke-width="1.200"/></svg>
<div class="a" style="left:1361px;top:738px;width:1px;height:30px;background:#5a6880"></div>
<div class="a" style="left:368px;top:148px;width:230px;height:260px;background:#f2f2f2;border:1px solid #cfcfcf;box-shadow:2px 2px 3px rgba(0,0,0,0.45)"></div>
<div class="a" style="left:369px;top:149px;width:30px;height:259px;background:#f5f5f5"></div>
<div class="t" style="left:403.3px;top:156.2px;font-size:12px;letter-spacing:-0.070px;">Обновить таблицу</div>
<div class="t" style="left:403.3px;top:185.0px;font-size:12px;letter-spacing:-0.244px;">Выбрать все</div>
<div class="t" style="left:403.3px;top:206.8px;font-size:12px;letter-spacing:-0.141px;">Отменить выбор всех</div>
<div class="t" style="left:403.3px;top:235.7px;font-size:12px;letter-spacing:0.008px;">Копировать ячейку</div>
<div class="t" style="left:403.3px;top:257.7px;font-size:12px;letter-spacing:-0.120px;">Копировать выделение</div>
<div class="t" style="left:403.3px;top:279.7px;font-size:12px;letter-spacing:0.104px;">Копировать имя колонки</div>
<div class="t" style="left:403.3px;top:308.7px;font-size:12px;letter-spacing:-0.199px;">Экспорт в файл</div>
<div class="t" style="left:403.3px;top:337.7px;font-size:12px;letter-spacing:-0.189px;">Найти</div>
<div class="t" style="left:403.3px;top:359.7px;font-size:12px;letter-spacing:0.014px;">Фильтр</div>
<div class="a" style="left:399px;top:176px;width:196px;height:1px;background:#d7d7d7"></div>
<div class="a" style="left:399px;top:227px;width:196px;height:1px;background:#d7d7d7"></div>
<div class="a" style="left:399px;top:300px;width:196px;height:1px;background:#d7d7d7"></div>
<div class="a" style="left:399px;top:329px;width:196px;height:1px;background:#d7d7d7"></div>
<div class="a" style="left:399px;top:380px;width:196px;height:1px;background:#d7d7d7"></div>
<div class="a" style="left:371px;top:384px;width:222px;height:22px;background:#91c9f7"></div>
<div class="t" style="left:403.3px;top:388.7px;font-size:12px;letter-spacing:-0.171px;">Добавить в словари</div>
<svg class="a" style="left:581px;top:391px;" width="6" height="8" viewBox="0 0 6 8"><path d="M1 0.6l3.6 3.4L1 7.4" fill="none" stroke="#222" stroke-width="1.1"/></svg>
<svg class="a" style="left:372px;top:152px;" width="22" height="20" viewBox="0 0 22 20"><g fill="#66c856" stroke="#0e6a2a" stroke-width="0.950" stroke-linejoin="round"><path d="M6.300 4.100H10.800V5H8.700C8.100 5.300 7.800 5.900 7.800 6.500V10.200H9.800L6 13.700 2.100 10.200H4.300V6.500C4.300 5.100 5.100 4.400 6.300 4.100Z"/><path d="M13.900 5.200L17.900 8.600H15.800V12C15.800 13.500 15 14.400 13.900 14.800H9.200V13.900H11.500C12 13.600 12.300 13 12.300 12.400V8.600H10.100Z"/></g></svg>
<svg class="a" style="left:375px;top:184px;" width="14" height="14" viewBox="0 0 14 14"><rect x="0.5" y="0.5" width="13" height="13" fill="#e3e3e3" stroke="#5a5a5a"/><path d="M3.6 7.6l2.6 2.4 5.6-6.6" fill="none" stroke="#1da64e" stroke-width="1.7"/></svg>
<svg class="a" style="left:375px;top:206px;" width="14" height="14" viewBox="0 0 14 14"><rect x="0.5" y="0.5" width="13" height="13" fill="#e3e3e3" stroke="#5a5a5a"/></svg>
<svg class="a" style="left:374.5px;top:235px;" width="17.2" height="14" viewBox="0 0 16 13"><path d="M0.5 0.5h4.8l1.8 1.8v7.4H0.5z" fill="#fff" stroke="#3a3a3a"/><path d="M2 3.5h3M2 5.5h3.6M2 7.5h3.6" stroke="#3a3a3a" stroke-width="0.9"/><path d="M6.5 3.5h5l2.2 2.2v6.8H6.5z" fill="#fff" stroke="#3b3bab"/><path d="M8.2 7h2.6M8.2 8.8h3.8M8.2 10.6h3.8" stroke="#2d2d2d" stroke-width="0.9"/></svg>
<svg class="a" style="left:374.5px;top:257px;" width="17.2" height="14" viewBox="0 0 16 13"><path d="M0.5 0.5h4.8l1.8 1.8v7.4H0.5z" fill="#fff" stroke="#3a3a3a"/><path d="M2 3.5h3M2 5.5h3.6M2 7.5h3.6" stroke="#3a3a3a" stroke-width="0.9"/><path d="M6.5 3.5h5l2.2 2.2v6.8H6.5z" fill="#fff" stroke="#3b3bab"/><path d="M8.2 7h2.6M8.2 8.8h3.8M8.2 10.6h3.8" stroke="#2d2d2d" stroke-width="0.9"/></svg>
<svg class="a" style="left:374.5px;top:279px;" width="17.2" height="14" viewBox="0 0 16 13"><path d="M0.5 0.5h4.8l1.8 1.8v7.4H0.5z" fill="#fff" stroke="#3a3a3a"/><path d="M2 3.5h3M2 5.5h3.6M2 7.5h3.6" stroke="#3a3a3a" stroke-width="0.9"/><path d="M6.5 3.5h5l2.2 2.2v6.8H6.5z" fill="#fff" stroke="#3b3bab"/><path d="M8.2 7h2.6M8.2 8.8h3.8M8.2 10.6h3.8" stroke="#2d2d2d" stroke-width="0.9"/></svg>
<svg class="a" style="left:375px;top:306.5px;" width="15" height="16" viewBox="0 0 15 16"><path d="M1 1h6v4" fill="none" stroke="#c80000" stroke-width="1.100"/><path d="M4 3.800h5L6.500 7z" fill="#c80000"/><path d="M0.200 5.800H5.200L7.200 8.100 9.200 5.800H13.200L9.500 10.400 11.200 12.500H12.800V13.900H14.200V15.800H0.400V14.500L4.600 10.400Z" fill="#ffc400" stroke="#b08a10" stroke-width="0.700"/><path d="M1.800 6.600L10.800 15.200" stroke="#a8862a" stroke-width="0.700"/></svg>
<svg class="a" style="left:374.9px;top:337.8px;" width="16" height="13.5" viewBox="0 0 16 13.5"><path d="M2.900 0.200H6.200V2.500L7.700 4.800V9.700H5.200V13.200H0.100V6.600L1.800 3.700 2.900 2.500Z M12.500 0.200H9.200V2.500L7.700 4.800V9.700H10.200V13.200H15.300V6.600L13.600 3.700 12.500 2.500Z" fill="#3c3c3c"/><g fill="#f4f4f4"><rect x="4" y="1.200" width="1.100" height="1.100"/><rect x="10.300" y="1.200" width="1.100" height="1.100"/><rect x="2.200" y="6.300" width="0.900" height="2.600"/><rect x="1.100" y="10.300" width="0.900" height="1.900"/><rect x="6.300" y="6" width="0.900" height="2.400"/><rect x="9.100" y="6.300" width="0.900" height="2.600"/><rect x="11.300" y="10.300" width="0.900" height="1.900"/><rect x="3.400" y="4" width="0.900" height="0.900"/><rect x="8.700" y="4" width="0.900" height="0.900"/></g></svg>
<svg class="a" style="left:374.8px;top:360px;" width="15" height="14" viewBox="0 0 15 14"><defs><linearGradient id="fg" x1="0" x2="1"><stop offset="0" stop-color="#1a1a1a"/><stop offset=".38" stop-color="#9c9c9c"/><stop offset=".55" stop-color="#2a2a2a"/><stop offset="1" stop-color="#111"/></linearGradient></defs><path d="M0.200 0.300H14.400V1.500L9.200 7.600V10.600L5.600 13.200V7.600L0.200 1.500Z" fill="url(#fg)" stroke="#151515" stroke-width="0.500"/><path d="M1 1h12.600" stroke="#555" stroke-width="0.800"/></svg>
<div class="a" style="left:593px;top:382px;width:167px;height:116px;background:#f2f2f2;border:1px solid #cfcfcf;box-shadow:2px 2px 3px rgba(0,0,0,0.45)"></div>
<div class="a" style="left:595px;top:384px;width:161px;height:22px;background:#91c9f7"></div>
<div class="t" style="left:627.4px;top:389.4px;font-size:12px;letter-spacing:0.000px;transform:scaleX(0.9340);transform-origin:0 0;">SpellChecks</div>
<div class="t" style="left:627.4px;top:411.4px;font-size:12px;letter-spacing:-0.020px;">HumanNames</div>
<div class="t" style="left:627.4px;top:433.4px;font-size:12px;letter-spacing:0.230px;">Morphology</div>
<div class="t" style="left:627.4px;top:455.4px;font-size:12px;letter-spacing:0.000px;transform:scaleX(0.9400);transform-origin:0 0;">StopLists</div>
<div class="t" style="left:627.4px;top:477.4px;font-size:12px;letter-spacing:-0.203px;">Synonyms</div>
<div class="a" style="left:1px;top:44px;width:9px;height:23px;background:rgba(255,255,255,0.55)"></div>
<svg class="a" style="left:3px;top:48px;" width="5" height="16" viewBox="0 0 5 16"><path d="M1 1.500h2.200v1.200H2.200v1H1zM1 5.800h2.200V7H2.200v1H1zM1 10h2.200v1.200H2.200v1H1zM1 14.200h2.200v1.200H2.200v.6H1z" fill="#4a4a4a"/></svg>
<div class="a" style="left:418px;top:44px;width:9px;height:23px;background:rgba(255,255,255,0.55)"></div>
<svg class="a" style="left:420px;top:48px;" width="5" height="16" viewBox="0 0 5 16"><path d="M1 1.500h2.200v1.200H2.200v1H1zM1 5.800h2.200V7H2.200v1H1zM1 10h2.200v1.200H2.200v1H1zM1 14.200h2.200v1.200H2.200v.6H1z" fill="#4a4a4a"/></svg>
<svg class="a" style="left:17px;top:49px;" width="12" height="13" viewBox="0 0 12 13"><path d="M0.600 0.600h7l3 3v8.800H0.600z" fill="#fff" stroke="#2a2a2a" stroke-width="1.200"/><path d="M7.600 0.600v3h3" fill="none" stroke="#2a2a2a" stroke-width="1"/></svg>
<svg class="a" style="left:37px;top:48.5px;" width="17" height="14" viewBox="0 0 17 14"><path d="M8 2.500c1.500-2 4-2 5.500 0" fill="none" stroke="#111" stroke-width="1"/><path d="M12.500 3.800l2.300-.3-.5-2.200z" fill="#111"/><path d="M0.500 13V4.500h2.500l1-1h4l1 1v2H5z" fill="#f4ec78" stroke="#555" stroke-width="0.800"/><path d="M0.500 13L4 7.500h12.500L12 13z" fill="#8e8e3e" stroke="#333" stroke-width="0.800"/></svg>
<svg class="a" style="left:61px;top:49px;" width="15" height="14" viewBox="0 0 15 14"><path d="M0.500 0.500h13l1 1v12h-14z" fill="#5e5e5e" stroke="#3a3a3a" stroke-width="0.800"/><rect x="3" y="1" width="8.500" height="6" fill="#cfcfcf"/><rect x="3" y="9" width="9" height="4.500" fill="#3c3c3c"/><rect x="9" y="10" width="2" height="3" fill="#bdbdbd"/><rect x="12.200" y="1.500" width="1.200" height="1.500" fill="#ddd"/></svg>
<div class="a" style="left:83px;top:47px;width:1px;height:17px;background:#d6d6d6"></div>
<svg class="a" style="left:94.5px;top:48.5px;" width="10" height="15" viewBox="0 0 10 15"><path d="M2.200 0.500L6 9M7.800 0.500L4 9" stroke="#b4b4b4" stroke-width="1.500" fill="none"/><ellipse cx="2.300" cy="11.500" rx="1.700" ry="2.500" fill="none" stroke="#b4b4b4" stroke-width="1.200"/><ellipse cx="7.700" cy="11.500" rx="1.700" ry="2.500" fill="none" stroke="#b4b4b4" stroke-width="1.200"/></svg>
<svg class="a" style="left:115px;top:49px;" width="16" height="13" viewBox="0 0 16 13"><path d="M0.500 0.500h5l2 2v6.500H0.500z" fill="#ececec" stroke="#b8b8b8"/><path d="M2 3.500h3M2 5.500h4" stroke="#b8b8b8" stroke-width="0.900"/><path d="M6.500 3.500h5.500l2.500 2.500v6.500H6.500z" fill="#ececec" stroke="#b8b8b8"/><path d="M8.200 7.500h3M8.200 9.500h4.500" stroke="#b8b8b8" stroke-width="0.900"/></svg>
<svg class="a" style="left:137px;top:49px;" width="17" height="14" viewBox="0 0 17 14"><path d="M0.500 1.500h4.500l1.500-1h2l1.500 1h4.500v10.500h-14z" fill="#c9c9c9" stroke="#bababa"/><path d="M4.500 1.500h6v1.800h-6z" fill="#e4e4e4"/><path d="M6.500 7.500h7l2.500 2v4h-9.500z" fill="#efefef" stroke="#b4b4b4"/><path d="M8 10h4M8 11.800h6.500" stroke="#b8b8b8" stroke-width="0.900"/></svg>
<div class="a" style="left:160px;top:47px;width:1px;height:17px;background:#d6d6d6"></div>
<svg class="a" style="left:169px;top:50px;" width="15" height="12.5" viewBox="0 0 15 12.5"><rect x="0.500" y="0.500" width="14" height="11.500" fill="#fff" stroke="#5a5a5a"/><rect x="0.500" y="0.500" width="14" height="1.800" fill="#4a4acc"/><rect x="2.500" y="4.500" width="2" height="2" fill="#c88a1e"/><rect x="2.500" y="8" width="2" height="2" fill="#c88a1e"/><path d="M6.500 3.500v7.500" stroke="#9a9a9a"/><path d="M8.500 4.500h4M8.500 6.500h4M8.500 8.500h4" stroke="#4a4aff" stroke-width="0.900"/></svg>
<svg class="a" style="left:192px;top:50px;" width="14.5" height="12.5" viewBox="0 0 14.5 12.5"><rect x="0" y="0" width="14.500" height="4.300" fill="#159a3a"/><rect x="0" y="4.300" width="14.500" height="4" fill="#c81e1e"/><rect x="0" y="8.300" width="14.500" height="4.200" fill="#1616c2"/><path d="M2 2.200h10M2 6.300h4M2 10.300h3" stroke="#e8e8e8" stroke-width="0.800"/><circle cx="9.300" cy="8.300" r="3.600" fill="#e2e2e2"/><g stroke="#e2e2e2" stroke-width="1.800"><path d="M9.300 3.600v9.400M4.600 8.300H14M6 5l6.600 6.600M12.600 5L6 11.600"/></g><circle cx="9.300" cy="8.300" r="1.400" fill="#3a2aa8"/><rect x="8.600" y="7.600" width="1.400" height="1.400" fill="#c81e1e"/></svg>
<svg class="a" style="left:214px;top:49px;" width="15" height="14" viewBox="0 0 15 14"><path d="M3 7L12 2.500M3 7l9 4.500" stroke="#333" stroke-width="1.100"/><circle cx="2.800" cy="7" r="2.300" fill="#e23a10"/><circle cx="12.200" cy="2.500" r="2.300" fill="#3c3ca8"/><circle cx="12.200" cy="11.500" r="2.300" fill="#f8b414"/></svg>
<div class="a" style="left:237px;top:47px;width:1px;height:17px;background:#d6d6d6"></div>
<svg class="a" style="left:246px;top:50px;" width="14" height="11" viewBox="0 0 14 11"><path d="M4 5.500C6 2 10.500 2 12 5.500c1 2.500-.5 4.500-2.500 5" fill="none" stroke="#b2b2b2" stroke-width="1.700"/><path d="M0.500 2.500l1 6 5.500-2z" fill="#b2b2b2"/></svg>
<svg class="a" style="left:265px;top:54px;" width="6" height="4" viewBox="0 0 6 4"><path d="M0 0h6l-3 3.500z" fill="#9c9c9c"/></svg>
<svg class="a" style="left:279px;top:50px;" width="14" height="11" viewBox="0 0 14 11"><path d="M10 5.500C8 2 3.500 2 2 5.500c-1 2.500.5 4.500 2.500 5" fill="none" stroke="#b2b2b2" stroke-width="1.700"/><path d="M13.500 2.500l-1 6-5.500-2z" fill="#b2b2b2"/></svg>
<svg class="a" style="left:298px;top:54px;" width="6" height="4" viewBox="0 0 6 4"><path d="M0 0h6l-3 3.500z" fill="#9c9c9c"/></svg>
<div class="a" style="left:311px;top:47px;width:1px;height:17px;background:#d6d6d6"></div>
<svg class="a" style="left:322px;top:50px;" width="9" height="12" viewBox="0 0 9 12"><path d="M1 1l7 4.800L1 10.800z" fill="#e8f6e8" stroke="#1f9a1f" stroke-width="1.600"/></svg>
<svg class="a" style="left:345.5px;top:50px;" width="9" height="12" viewBox="0 0 9 12"><path d="M0.500 0.300L8 5.800 0.500 11.300z" fill="#18a018"/></svg>
<svg class="a" style="left:367px;top:51px;" width="10" height="10" viewBox="0 0 10 10"><rect x="0.500" y="0.500" width="9" height="8.800" rx="1" fill="#c2c2c2" stroke="#b0b0b0" stroke-width="0.600"/></svg>
<div class="a" style="left:388px;top:47px;width:1px;height:17px;background:#d6d6d6"></div>
<svg class="a" style="left:396.5px;top:49.5px;" width="13" height="13" viewBox="0 0 13 13"><circle cx="6.500" cy="6.500" r="5.700" fill="#d0d0d0" stroke="#b4b4b4" stroke-width="1.200"/><rect x="2.800" y="5.300" width="7.400" height="2.400" fill="#f2f2f2" stroke="#b4b4b4" stroke-width="0.500"/></svg>
<svg class="a" style="left:432px;top:49px;" width="15" height="14" viewBox="0 0 15 14"><path d="M3.500 3.500L7.500 8M11.500 3.500L7.500 8v4" stroke="#888" stroke-width="0.800"/><path d="M1 1.500l1.500-1.200h2.500l1.500 1.200v2.500l-1.500 1.200H2.500L1 4z" fill="#1414d2"/><path d="M8.500 1.500l1.500-1.200h2.500L14 1.500v2.500l-1.500 1.200H10L8.500 4z" fill="#f6b40e"/><path d="M4.800 5.800l1.500-1.200h2.400l1.500 1.200v2.500l-1.500 1.200H6.300L4.800 8.300z" fill="#d01212"/><path d="M5.300 9.500h4.400v2.800l-1.200 1.200H6.500l-1.200-1.200z" fill="#fff" stroke="#9a9a9a" stroke-width="0.600"/></svg>
<svg class="a" style="left:455px;top:49px;" width="15" height="14" viewBox="0 0 15 14"><path d="M1 1.500l1.300-1h2.400l1.300 1v3l-1.300 1H2.300l-1.300-1z" fill="#b4b4b4"/><rect x="8.500" y="0.500" width="5" height="5" rx="1.200" fill="#dedede" stroke="#c4c4c4" stroke-width="0.500"/><rect x="1" y="8.500" width="5" height="5" rx="1.200" fill="#efefef" stroke="#cfcfcf" stroke-width="0.500"/><path d="M11 8l3 2.200-1.200 3.300H9.200L8 10.200z" fill="#b4b4b4"/></svg>
<svg class="a" style="left:479px;top:49.5px;" width="12" height="13" viewBox="0 0 12 13"><path d="M6.500 0.800l4.300 4.700H8.500v5.800H1V9h5V5.500H2.500z" fill="#f2f2f2" stroke="#a8a8a8" stroke-width="0.900"/></svg>
<svg class="a" style="left:0px;top:0px;" width="20" height="20" viewBox="0 0 20 20"><circle cx="9.500" cy="10.800" r="6.400" fill="#d40000"/><path d="M9.500 10.800L5.700 5.600A6.400 6.400 0 0 1 10.200 4.400z" fill="#f4f000"/><path d="M9.500 10.800L6.300 5.200A6.400 6.400 0 0 1 10.500 4.500z" fill="#fff400"/><path d="M9.500 10.800L10.600 4.500A6.400 6.400 0 0 1 15.600 8.800z" fill="#1a10e0"/><path d="M9.500 10.800L13.500 15.800A6.400 6.400 0 0 1 7.300 16.800z" fill="#10e010"/><path d="M2.100 7.200L4.800 6.600 8.600 8.900 11.800 10.600 12.600 8.400 13.600 8 14.300 10.400 16 11.600 18 13.200 17.600 14.400 15.400 14.800 13.600 16.600 12 16 11.400 13.800 9.200 12.400 6.400 11.600 4.600 12.800 2.300 12.400Z" fill="#f59a23"/><path d="M5.800 12l1-1.200" stroke="#b86a10" stroke-width="0.600"/><circle cx="15.400" cy="13.400" r="0.750" fill="#fff"/><circle cx="16.600" cy="12.400" r="0.700" fill="#1a1208"/><circle cx="12.400" cy="15.400" r="0.600" fill="#1a1208"/><path d="M12.800 10.600l.5-1.800" stroke="#a8620c" stroke-width="0.700"/></svg>
<div class="t" style="left:6.5px;top:29.3px;font-size:11px;font-weight:bold;letter-spacing:-1.300px;color:#222">bug</div>
<div class="t" style="left:16.0px;top:23.3px;font-size:9.500px;font-weight:bold;color:#e83c3c">a</div>
<svg class="a" style="left:11.0px;top:32.0px;" width="7" height="7" viewBox="0 0 7 7"><path d="M0.500 6.500L5.500 0.500" stroke="#e83c3c" stroke-width="0.900"/></svg>
<div class="t" style="left:43.5px;top:163.10000000000002px;font-size:11px;font-weight:bold;letter-spacing:-1.300px;color:#222">bug</div>
<div class="t" style="left:53.0px;top:157.10000000000002px;font-size:9.500px;font-weight:bold;color:#e83c3c">a</div>
<svg class="a" style="left:48.0px;top:165.8px;" width="7" height="7" viewBox="0 0 7 7"><path d="M0.500 6.500L5.500 0.500" stroke="#e83c3c" stroke-width="0.900"/></svg>
<svg class="a" style="left:44px;top:141px;" width="16" height="15" viewBox="0 0 16 15"><rect x="0.500" y="1.500" width="15" height="13" rx="1.500" fill="#f4f4f4" stroke="#555"/><rect x="1" y="2" width="14" height="3" fill="#6a6a6a"/><path d="M3 0.500v3M5.500 0.500v3M8 0.500v3M10.500 0.500v3M13 0.500v3" stroke="#eee" stroke-width="0.900"/><path d="M3 7.500h4M9 7.500h4M3 11.500h4M9 11.500h4" stroke="#e64a4a" stroke-width="1.300"/><path d="M2.500 9.500h11" stroke="#9a9a9a" stroke-width="0.800"/></svg>
<svg class="a" style="left:235px;top:101.8px;" width="16" height="13.5" viewBox="0 0 16 13.5"><path d="M2.900 0.200H6.200V2.500L7.700 4.800V9.700H5.200V13.200H0.100V6.600L1.800 3.700 2.900 2.500Z M12.500 0.200H9.200V2.500L7.700 4.800V9.700H10.200V13.200H15.300V6.600L13.600 3.700 12.500 2.500Z" fill="#3c3c3c"/><g fill="#f4f4f4"><rect x="4" y="1.200" width="1.100" height="1.100"/><rect x="10.300" y="1.200" width="1.100" height="1.100"/><rect x="2.200" y="6.300" width="0.900" height="2.600"/><rect x="1.100" y="10.300" width="0.900" height="1.900"/><rect x="6.300" y="6" width="0.900" height="2.400"/><rect x="9.100" y="6.300" width="0.900" height="2.600"/><rect x="11.300" y="10.300" width="0.900" height="1.900"/><rect x="3.400" y="4" width="0.900" height="0.900"/><rect x="8.700" y="4" width="0.900" height="0.900"/></g></svg>
<svg class="a" style="left:296.5px;top:100.5px;" width="15" height="14" viewBox="0 0 15 14"><defs><linearGradient id="fg" x1="0" x2="1"><stop offset="0" stop-color="#1a1a1a"/><stop offset=".38" stop-color="#9c9c9c"/><stop offset=".55" stop-color="#2a2a2a"/><stop offset="1" stop-color="#111"/></linearGradient></defs><path d="M0.200 0.300H14.400V1.500L9.200 7.600V10.600L5.600 13.200V7.600L0.200 1.500Z" fill="url(#fg)" stroke="#151515" stroke-width="0.500"/><path d="M1 1h12.600" stroke="#555" stroke-width="0.800"/></svg>
<svg class="a" style="left:373px;top:100.5px;" width="14" height="14" viewBox="0 0 14 14"><path d="M13.6 3.2l-2.4 2.4-2-.6-.6-2 2.4-2.4C9.2 0 7.2.4 6.2 1.8c-.8 1.1-.9 2.4-.5 3.6L.6 10.6c-.8.8-.8 2 0 2.8s2 .8 2.8 0l5.200-5.100c1.200.4 2.500.3 3.600-.5C13.600 6.800 14 4.800 13.600 3.200z" fill="#2b2b2b"/></svg>
</body></html>
